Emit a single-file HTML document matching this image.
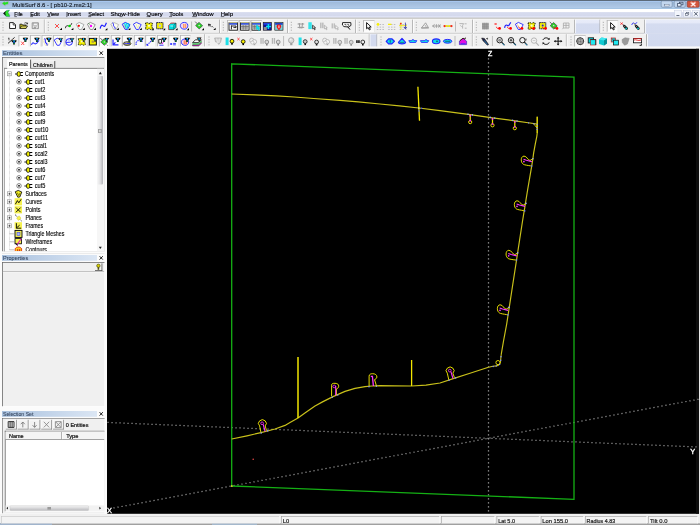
<!DOCTYPE html>
<html><head><meta charset="utf-8"><title>MultiSurf 8.6</title>
<style>
html,body{margin:0;padding:0;background:#f0f0f0;overflow:hidden}
svg{display:block}
text{font-family:"Liberation Sans",sans-serif}
</style></head><body>
<svg width="700" height="525" viewBox="0 0 700 525">
<defs><filter id="nf" x="0" y="0" width="100%" height="100%" filterUnits="userSpaceOnUse" color-interpolation-filters="sRGB"><feOffset dx="0" dy="0"/></filter></defs>
<g filter="url(#nf)">
<defs>
<linearGradient id="gTitle" x1="0" y1="0" x2="0" y2="1">
<stop offset="0" stop-color="#99b5d6"/><stop offset="1" stop-color="#b3cdea"/></linearGradient>
<linearGradient id="gMenu" x1="0" y1="0" x2="0" y2="1">
<stop offset="0" stop-color="#ffffff"/><stop offset="0.28" stop-color="#ffffff"/><stop offset="0.4" stop-color="#d6dbee"/><stop offset="0.75" stop-color="#d4d9ec"/><stop offset="0.9" stop-color="#e6eafb"/><stop offset="1" stop-color="#e6eafb"/></linearGradient>
<linearGradient id="gHdr" x1="0" y1="0" x2="1" y2="0">
<stop offset="0" stop-color="#a9c1de"/><stop offset="1" stop-color="#dbe6f4"/></linearGradient>
<linearGradient id="gLav" x1="0" y1="19.6" x2="0" y2="48" gradientUnits="userSpaceOnUse">
<stop offset="0" stop-color="#e8ecf9"/><stop offset="0.1" stop-color="#e6eaf8"/><stop offset="0.16" stop-color="#d5dcf0"/><stop offset="1" stop-color="#d1d9ee"/></linearGradient>
</defs>
<rect x="0" y="0" width="700" height="525" fill="#f0f0f0" />
<rect x="0" y="0" width="700" height="9" fill="url(#gTitle)" />
<rect x="0" y="0" width="700" height="0.9" fill="#4c5661" />
<rect x="0" y="0.9" width="700" height="1" fill="#a9c9f1" />
<rect x="0" y="8" width="700" height="1" fill="#a3c3e3" />
<rect x="0" y="9" width="700" height="9" fill="url(#gMenu)" />
<rect x="0" y="17.6" width="700" height="1.2" fill="#b9b9b5" />
<rect x="0" y="18.8" width="700" height="1" fill="#fbfbfb" />
<rect x="0" y="19.6" width="700" height="28.6" fill="#f0f0f0" />
<rect x="575" y="19.6" width="125" height="14.2" fill="url(#gLav)" />
<rect x="369.5" y="33.8" width="8" height="14.0" fill="#d3daee" />
<rect x="647" y="33.6" width="53" height="14.2" fill="url(#gLav)" />
<rect x="600" y="19.6" width="44.5" height="13.6" fill="#f0f0f0" />
<rect x="0" y="32.9" width="575" height="0.8" fill="#b2b2b2" />
<rect x="600" y="32.9" width="44.5" height="0.8" fill="#b2b2b2" />
<rect x="0" y="33.7" width="575" height="0.6" fill="#ffffff" />
<rect x="600" y="33.7" width="47" height="0.6" fill="#ffffff" />
<rect x="0" y="47.6" width="700" height="0.9" fill="#d8d8d8" />
<rect x="43.9" y="19.6" width="0.8" height="13.399999999999999" fill="#a0a0a0" />
<rect x="44.699999999999996" y="19.6" width="0.8" height="13.399999999999999" fill="#ffffff" />
<rect x="219.1" y="19.6" width="0.8" height="13.399999999999999" fill="#a0a0a0" />
<rect x="219.9" y="19.6" width="0.8" height="13.399999999999999" fill="#ffffff" />
<rect x="287.1" y="19.6" width="0.8" height="13.399999999999999" fill="#a0a0a0" />
<rect x="287.9" y="19.6" width="0.8" height="13.399999999999999" fill="#ffffff" />
<rect x="355.1" y="19.6" width="0.8" height="13.399999999999999" fill="#a0a0a0" />
<rect x="355.9" y="19.6" width="0.8" height="13.399999999999999" fill="#ffffff" />
<rect x="412.1" y="19.6" width="0.8" height="13.399999999999999" fill="#a0a0a0" />
<rect x="412.9" y="19.6" width="0.8" height="13.399999999999999" fill="#ffffff" />
<rect x="472.1" y="19.6" width="0.8" height="13.399999999999999" fill="#a0a0a0" />
<rect x="472.9" y="19.6" width="0.8" height="13.399999999999999" fill="#ffffff" />
<rect x="574.1" y="19.6" width="0.8" height="13.399999999999999" fill="#a0a0a0" />
<rect x="574.9" y="19.6" width="0.8" height="13.399999999999999" fill="#ffffff" />
<rect x="644.1" y="19.6" width="0.8" height="13.399999999999999" fill="#a0a0a0" />
<rect x="644.9" y="19.6" width="0.8" height="13.399999999999999" fill="#ffffff" />
<rect x="599.6" y="19.6" width="0.8" height="13.399999999999999" fill="#a0a0a0" />
<rect x="600.4" y="19.6" width="0.8" height="13.399999999999999" fill="#ffffff" />
<rect x="2.5" y="21.8" width="1" height="1.2" fill="#b0b0b0" />
<rect x="2.5" y="24.400000000000002" width="1" height="1.2" fill="#b0b0b0" />
<rect x="2.5" y="27.0" width="1" height="1.2" fill="#b0b0b0" />
<rect x="2.5" y="29.6" width="1" height="1.2" fill="#b0b0b0" />
<rect x="47.8" y="21.8" width="1" height="1.2" fill="#b0b0b0" />
<rect x="47.8" y="24.400000000000002" width="1" height="1.2" fill="#b0b0b0" />
<rect x="47.8" y="27.0" width="1" height="1.2" fill="#b0b0b0" />
<rect x="47.8" y="29.6" width="1" height="1.2" fill="#b0b0b0" />
<rect x="222.8" y="21.8" width="1" height="1.2" fill="#b0b0b0" />
<rect x="222.8" y="24.400000000000002" width="1" height="1.2" fill="#b0b0b0" />
<rect x="222.8" y="27.0" width="1" height="1.2" fill="#b0b0b0" />
<rect x="222.8" y="29.6" width="1" height="1.2" fill="#b0b0b0" />
<rect x="290.8" y="21.8" width="1" height="1.2" fill="#b0b0b0" />
<rect x="290.8" y="24.400000000000002" width="1" height="1.2" fill="#b0b0b0" />
<rect x="290.8" y="27.0" width="1" height="1.2" fill="#b0b0b0" />
<rect x="290.8" y="29.6" width="1" height="1.2" fill="#b0b0b0" />
<rect x="358.8" y="21.8" width="1" height="1.2" fill="#b0b0b0" />
<rect x="358.8" y="24.400000000000002" width="1" height="1.2" fill="#b0b0b0" />
<rect x="358.8" y="27.0" width="1" height="1.2" fill="#b0b0b0" />
<rect x="358.8" y="29.6" width="1" height="1.2" fill="#b0b0b0" />
<rect x="415.8" y="21.8" width="1" height="1.2" fill="#b0b0b0" />
<rect x="415.8" y="24.400000000000002" width="1" height="1.2" fill="#b0b0b0" />
<rect x="415.8" y="27.0" width="1" height="1.2" fill="#b0b0b0" />
<rect x="415.8" y="29.6" width="1" height="1.2" fill="#b0b0b0" />
<rect x="475.8" y="21.8" width="1" height="1.2" fill="#b0b0b0" />
<rect x="475.8" y="24.400000000000002" width="1" height="1.2" fill="#b0b0b0" />
<rect x="475.8" y="27.0" width="1" height="1.2" fill="#b0b0b0" />
<rect x="475.8" y="29.6" width="1" height="1.2" fill="#b0b0b0" />
<rect x="602.8" y="21.8" width="1" height="1.2" fill="#b0b0b0" />
<rect x="602.8" y="24.400000000000002" width="1" height="1.2" fill="#b0b0b0" />
<rect x="602.8" y="27.0" width="1" height="1.2" fill="#b0b0b0" />
<rect x="602.8" y="29.6" width="1" height="1.2" fill="#b0b0b0" />
<rect x="204.4" y="34.2" width="0.8" height="13.399999999999999" fill="#a0a0a0" />
<rect x="205.20000000000002" y="34.2" width="0.8" height="13.399999999999999" fill="#ffffff" />
<rect x="368.8" y="34.2" width="0.8" height="13.399999999999999" fill="#a0a0a0" />
<rect x="369.59999999999997" y="34.2" width="0.8" height="13.399999999999999" fill="#ffffff" />
<rect x="471.90000000000003" y="34.2" width="0.8" height="13.399999999999999" fill="#a0a0a0" />
<rect x="472.7" y="34.2" width="0.8" height="13.399999999999999" fill="#ffffff" />
<rect x="565.9" y="34.2" width="0.8" height="13.399999999999999" fill="#a0a0a0" />
<rect x="566.6999999999999" y="34.2" width="0.8" height="13.399999999999999" fill="#ffffff" />
<rect x="646.2" y="34.2" width="0.8" height="13.399999999999999" fill="#a0a0a0" />
<rect x="647.0" y="34.2" width="0.8" height="13.399999999999999" fill="#ffffff" />
<rect x="376.6" y="34.2" width="0.8" height="13.399999999999999" fill="#a0a0a0" />
<rect x="377.4" y="34.2" width="0.8" height="13.399999999999999" fill="#ffffff" />
<rect x="2.5" y="36.4" width="1" height="1.2" fill="#b0b0b0" />
<rect x="2.5" y="39.0" width="1" height="1.2" fill="#b0b0b0" />
<rect x="2.5" y="41.6" width="1" height="1.2" fill="#b0b0b0" />
<rect x="2.5" y="44.2" width="1" height="1.2" fill="#b0b0b0" />
<rect x="208.5" y="36.4" width="1" height="1.2" fill="#b0b0b0" />
<rect x="208.5" y="39.0" width="1" height="1.2" fill="#b0b0b0" />
<rect x="208.5" y="41.6" width="1" height="1.2" fill="#b0b0b0" />
<rect x="208.5" y="44.2" width="1" height="1.2" fill="#b0b0b0" />
<rect x="380.5" y="36.4" width="1" height="1.2" fill="#b0b0b0" />
<rect x="380.5" y="39.0" width="1" height="1.2" fill="#b0b0b0" />
<rect x="380.5" y="41.6" width="1" height="1.2" fill="#b0b0b0" />
<rect x="380.5" y="44.2" width="1" height="1.2" fill="#b0b0b0" />
<rect x="475.8" y="36.4" width="1" height="1.2" fill="#b0b0b0" />
<rect x="475.8" y="39.0" width="1" height="1.2" fill="#b0b0b0" />
<rect x="475.8" y="41.6" width="1" height="1.2" fill="#b0b0b0" />
<rect x="475.8" y="44.2" width="1" height="1.2" fill="#b0b0b0" />
<rect x="570.5" y="36.4" width="1" height="1.2" fill="#b0b0b0" />
<rect x="570.5" y="39.0" width="1" height="1.2" fill="#b0b0b0" />
<rect x="570.5" y="41.6" width="1" height="1.2" fill="#b0b0b0" />
<rect x="570.5" y="44.2" width="1" height="1.2" fill="#b0b0b0" />
<rect x="191.35" y="21.5" width="0.7" height="10.0" fill="#a8a8a8" />
<rect x="455.15" y="21.5" width="0.7" height="10.0" fill="#a8a8a8" />
<rect x="283.34999999999997" y="36" width="0.7" height="10" fill="#a8a8a8" />
<rect x="454.65" y="36" width="0.7" height="10" fill="#a8a8a8" />
<rect x="491.95" y="36" width="0.7" height="10" fill="#a8a8a8" />
<path d="M1.8,3.6 L4.6,1.0 L4.8,2.2 L8.6,1.2 L8.2,4.4 L5.4,4.8 L5.6,6.2 Z" fill="#22e022" stroke="#c8a8e0" stroke-width="0.5"/>
<text x="12.2" y="6.8" font-size="6.2" fill="#141c28" textLength="79.4" lengthAdjust="spacingAndGlyphs"  stroke="#141c28" stroke-width="0.15">MultiSurf 8.6 - [ pb10-2.ms2:1]</text>
<rect x="661.2" y="0.9" width="11" height="6.4" rx="1.2" fill="#c2d6ee" stroke="#6f86a6" stroke-width="0.6"/>
<rect x="674.2" y="0.9" width="11" height="6.4" rx="1.2" fill="#c2d6ee" stroke="#6f86a6" stroke-width="0.6"/>
<rect x="687.2" y="0.9" width="12" height="6.4" rx="1.2" fill="#d2553c" stroke="#8a3a30" stroke-width="0.6"/>
<rect x="664.5" y="4.4" width="4.6" height="1.6" fill="#f4f8ff" stroke="#50607a" stroke-width="0.4"/>
<rect x="679.4" y="2.2" width="3.6" height="2.6" fill="none" stroke="#42526c" stroke-width="0.8"/><rect x="677.4" y="3.6" width="3.6" height="2.6" fill="#e8f0fa" stroke="#42526c" stroke-width="0.8"/>
<path d="M691.4,2.6 L695.0,5.8 M695.0,2.6 L691.4,5.8" stroke="#f0a090" stroke-width="2.2" stroke-linecap="round"/><path d="M691.6,2.8 L694.8,5.6 M694.8,2.8 L691.6,5.6" stroke="#fff" stroke-width="1.1"/>
<rect x="674.6" y="10.6" width="7" height="6.4" fill="#f2f5fc" stroke="#c6cde0" stroke-width="0.5"/>
<rect x="683.6" y="10.6" width="7" height="6.4" fill="#f2f5fc" stroke="#c6cde0" stroke-width="0.5"/>
<rect x="692.4" y="10.6" width="7" height="6.4" fill="#f2f5fc" stroke="#c6cde0" stroke-width="0.5"/>
<rect x="676.4" y="15" width="3" height="0.9" fill="#5a6478" />
<rect x="686.4" y="12.4" width="2.4" height="2.0" fill="none" stroke="#5a6478" stroke-width="0.6"/><rect x="685.6" y="13.4" width="2.4" height="2.0" fill="#f2f5fc" stroke="#5a6478" stroke-width="0.6"/>
<path d="M694.2,12 L697.6,15.6 M697.6,12 L694.2,15.6" stroke="#4a5468" stroke-width="0.9"/>
<path d="M3.6,13.6 L6.4,10.4 L9.6,10 L8,12.4 L9.8,15.4 L9.6,16.8 L6,16.4 Z" fill="#22e022" stroke="#3030c0" stroke-width="0.3"/>
<path d="M3.2,13.4 L5.6,11 L6,15.8 Z" fill="#101010"/>
<path d="M5.2,12.8 L8.8,10.6 L7.4,13 L9,15.8 L6,15.4 Z" fill="#30e030"/>
<text x="14.3" y="15.7" font-size="6.1" fill="#08080c" textLength="8.4" lengthAdjust="spacingAndGlyphs"  stroke="#08080c" stroke-width="0.18">File</text>
<text x="30.2" y="15.7" font-size="6.1" fill="#08080c" textLength="9.6" lengthAdjust="spacingAndGlyphs"  stroke="#08080c" stroke-width="0.18">Edit</text>
<text x="47.2" y="15.7" font-size="6.1" fill="#08080c" textLength="11.8" lengthAdjust="spacingAndGlyphs"  stroke="#08080c" stroke-width="0.18">View</text>
<text x="66.2" y="15.7" font-size="6.1" fill="#08080c" textLength="14.8" lengthAdjust="spacingAndGlyphs"  stroke="#08080c" stroke-width="0.18">Insert</text>
<text x="88.2" y="15.7" font-size="6.1" fill="#08080c" textLength="15.8" lengthAdjust="spacingAndGlyphs"  stroke="#08080c" stroke-width="0.18">Select</text>
<text x="110.4" y="15.7" font-size="6.1" fill="#08080c" textLength="29.6" lengthAdjust="spacingAndGlyphs"  stroke="#08080c" stroke-width="0.18">Show-Hide</text>
<text x="146.6" y="15.7" font-size="6.1" fill="#08080c" textLength="16" lengthAdjust="spacingAndGlyphs"  stroke="#08080c" stroke-width="0.18">Query</text>
<text x="169.2" y="15.7" font-size="6.1" fill="#08080c" textLength="14.2" lengthAdjust="spacingAndGlyphs"  stroke="#08080c" stroke-width="0.18">Tools</text>
<text x="192.2" y="15.7" font-size="6.1" fill="#08080c" textLength="21.4" lengthAdjust="spacingAndGlyphs"  stroke="#08080c" stroke-width="0.18">Window</text>
<text x="220.8" y="15.7" font-size="6.1" fill="#08080c" textLength="12.2" lengthAdjust="spacingAndGlyphs"  stroke="#08080c" stroke-width="0.18">Help</text>
<rect x="14.3" y="16.45" width="2.6" height="0.6" fill="#18181c" />
<rect x="30.2" y="16.45" width="2.8" height="0.6" fill="#18181c" />
<rect x="47.2" y="16.45" width="3.2" height="0.6" fill="#18181c" />
<rect x="66.2" y="16.45" width="1.2" height="0.6" fill="#18181c" />
<rect x="88.2" y="16.45" width="3" height="0.6" fill="#18181c" />
<rect x="119.5" y="16.45" width="3" height="0.6" fill="#18181c" />
<rect x="146.6" y="16.45" width="3.6" height="0.6" fill="#18181c" />
<rect x="169.2" y="16.45" width="2.8" height="0.6" fill="#18181c" />
<rect x="192.2" y="16.45" width="4.6" height="0.6" fill="#18181c" />
<rect x="220.8" y="16.45" width="3.4" height="0.6" fill="#18181c" />
<rect x="0" y="513.4" width="700" height="10.6" fill="#f0f0f0" />
<rect x="0" y="513.4" width="700" height="0.6" fill="#ffffff" />
<rect x="0" y="523.3" width="700" height="1.7" fill="#a0a0a0" />
<rect x="0" y="523.3" width="52" height="1.7" fill="#a0b4cc" />
<rect x="212" y="523.3" width="45" height="1.7" fill="#a4b8cc" />
<rect x="1" y="516.0" width="278.6" height="7.4" fill="#f3f3f3" />
<rect x="1" y="516.0" width="278.6" height="0.6" fill="#c4c4c4" />
<rect x="1" y="516.0" width="0.6" height="7.4" fill="#c4c4c4" />
<rect x="279.1" y="516.0" width="0.5" height="7.4" fill="#ffffff" />
<rect x="281" y="516.0" width="158.60000000000002" height="7.4" fill="#f3f3f3" />
<rect x="281" y="516.0" width="158.60000000000002" height="0.6" fill="#9a9a9a" />
<rect x="281" y="516.0" width="0.6" height="7.4" fill="#9a9a9a" />
<rect x="439.1" y="516.0" width="0.5" height="7.4" fill="#ffffff" />
<rect x="441" y="516.0" width="54" height="7.4" fill="#f3f3f3" />
<rect x="441" y="516.0" width="54" height="0.6" fill="#9a9a9a" />
<rect x="441" y="516.0" width="0.6" height="7.4" fill="#9a9a9a" />
<rect x="494.5" y="516.0" width="0.5" height="7.4" fill="#ffffff" />
<rect x="496.6" y="516.0" width="42.799999999999955" height="7.4" fill="#f3f3f3" />
<rect x="496.6" y="516.0" width="42.799999999999955" height="0.6" fill="#9a9a9a" />
<rect x="496.6" y="516.0" width="0.6" height="7.4" fill="#9a9a9a" />
<rect x="538.9" y="516.0" width="0.5" height="7.4" fill="#ffffff" />
<rect x="540.8" y="516.0" width="42.80000000000007" height="7.4" fill="#f3f3f3" />
<rect x="540.8" y="516.0" width="42.80000000000007" height="0.6" fill="#9a9a9a" />
<rect x="540.8" y="516.0" width="0.6" height="7.4" fill="#9a9a9a" />
<rect x="583.1" y="516.0" width="0.5" height="7.4" fill="#ffffff" />
<rect x="585" y="516.0" width="62" height="7.4" fill="#f3f3f3" />
<rect x="585" y="516.0" width="62" height="0.6" fill="#9a9a9a" />
<rect x="585" y="516.0" width="0.6" height="7.4" fill="#9a9a9a" />
<rect x="646.5" y="516.0" width="0.5" height="7.4" fill="#ffffff" />
<rect x="648.4" y="516.0" width="49.60000000000002" height="7.4" fill="#f3f3f3" />
<rect x="648.4" y="516.0" width="49.60000000000002" height="0.6" fill="#9a9a9a" />
<rect x="648.4" y="516.0" width="0.6" height="7.4" fill="#9a9a9a" />
<rect x="697.5" y="516.0" width="0.5" height="7.4" fill="#ffffff" />
<text x="282.8" y="522.7" font-size="6.1" fill="#181818" textLength="6.4" lengthAdjust="spacingAndGlyphs"  stroke="#181818" stroke-width="0.2">L0</text>
<text x="498.2" y="522.7" font-size="6.1" fill="#181818" textLength="16.8" lengthAdjust="spacingAndGlyphs"  stroke="#181818" stroke-width="0.2">Lat 5.0</text>
<text x="542.2" y="522.7" font-size="6.1" fill="#181818" textLength="25.8" lengthAdjust="spacingAndGlyphs"  stroke="#181818" stroke-width="0.2">Lon 155.0</text>
<text x="586.6" y="522.7" font-size="6.1" fill="#181818" textLength="28.6" lengthAdjust="spacingAndGlyphs"  stroke="#181818" stroke-width="0.2">Radius 4.83</text>
<text x="650.0" y="522.7" font-size="6.1" fill="#181818" textLength="17.4" lengthAdjust="spacingAndGlyphs"  stroke="#181818" stroke-width="0.2">Tilt 0.0</text>
<rect x="0" y="46.4" width="700" height="2.6" fill="#fafafa" />
<rect x="107" y="48.8" width="592" height="465.0" fill="#000000" />
<rect x="696.0" y="48.8" width="3.0" height="464.9" fill="#0d0d0d" />
<rect x="699.1" y="48.8" width="0.9" height="464.9" fill="#e8e8e8" />
<g fill="none" stroke-linecap="butt">
<line x1="113.50" y1="507.98" x2="700.00" y2="399.00" stroke="#a4a4a4" stroke-width="1.25" stroke-dasharray="1.1 2.968" stroke-dashoffset="0"/>
<line x1="107.50" y1="422.45" x2="699.00" y2="447.06" stroke="#a4a4a4" stroke-width="1.25" stroke-dasharray="1.1 2.903" stroke-dashoffset="0"/>
<line x1="488.50" y1="58.30" x2="488.50" y2="513.50" stroke="#a4a4a4" stroke-width="1.25" stroke-dasharray="1.1 2.900" stroke-dashoffset="0"/>
<path d="M231.7,63.8 L574,77.2 L574,499.3 L231.7,486 Z" stroke="#14b014" stroke-width="1.3"/>
<rect x="231" y="485.3" width="1.6" height="1.5" fill="#e8e820" />
<polyline points="231.7,94.0 254.6,94.8 276.4,95.8 294.4,97.0 313.7,98.5 340.0,100.3 358.3,101.8 380.0,104.0 399.4,105.8 418.8,108.0 440.0,110.7 455.0,112.6 470.2,114.7 492.5,117.8 514.8,120.8 530.0,123.0 537.3,124.2" stroke="#c9c11a" stroke-width="1.2" stroke-linejoin="round" />
<polyline points="537.2,116.7 537.2,133.2 536.8,136.5 535.4,143.3 533.7,152.7 532.9,158.7 531.7,166.1 527.6,190.0 524.7,207.9 522.7,220.0 519.6,240.0 515.0,270.0 511.3,294.0 506.7,324.0 503.7,340.0 501.3,354.0" stroke="#c9c11a" stroke-width="1.2" stroke-linejoin="round" />
<polyline points="488.5,367.3 470.0,373.3 454.0,378.4 440.0,383.0 426.0,385.2 411.6,386.0 395.0,385.9 380.0,385.7 372.0,386.0 365.0,386.6 355.0,388.4 345.0,391.4 333.0,396.6 323.0,401.6 315.0,406.0 306.0,412.3 298.0,418.0 290.0,422.6 285.0,425.4 275.0,429.0 261.0,432.6 247.0,435.8 231.7,439.0" stroke="#c9c11a" stroke-width="1.2" stroke-linejoin="round" />
<path d="M501.3,354 L500.9,357 L500.6,361.2 C500.4,363.4 499.4,364.8 498.0,365.4 L496.2,365.9 L493,366.3 L488.5,367.3" stroke="#c9c11a" stroke-width="1.1"/>
<circle cx="498.0" cy="362.6" r="2.1" stroke="#f2e600" stroke-width="0.9"/>
<line x1="417.9" y1="86.7" x2="419.5" y2="120.8" stroke="#f2e600" stroke-width="1.3" />
<line x1="298" y1="357" x2="298" y2="418" stroke="#f2e600" stroke-width="1.5" />
<line x1="411.6" y1="360" x2="411.6" y2="386" stroke="#f2e600" stroke-width="1.3" />
<circle cx="418.8" cy="108.1" r="0.8" fill="#d8d8c0" stroke="none"/>
<circle cx="421.6" cy="108.3" r="0.7" fill="#3048ff" stroke="none"/>
<circle cx="418.8" cy="110.9" r="0.7" fill="#3048ff" stroke="none"/>
<line x1="470.2" y1="114.7" x2="470.2" y2="120.3" stroke="#f2e600" stroke-width="1.25" />
<circle cx="470.2" cy="122.10000000000001" r="1.6" stroke="#f2e600" stroke-width="0.95"/>
<circle cx="468.0" cy="114.2" r="0.8" fill="#90a0ff" stroke="none"/>
<circle cx="472.4" cy="114.9" r="0.8" fill="#90a0ff" stroke="none"/>
<circle cx="470.2" cy="115.7" r="0.9" fill="#ff30ff" stroke="none"/>
<circle cx="470.2" cy="120.7" r="0.85" fill="#ff30ff" stroke="none"/>
<line x1="492.5" y1="117.9" x2="492.5" y2="123.5" stroke="#f2e600" stroke-width="1.25" />
<circle cx="492.5" cy="125.30000000000001" r="1.6" stroke="#f2e600" stroke-width="0.95"/>
<circle cx="490.3" cy="117.4" r="0.8" fill="#90a0ff" stroke="none"/>
<circle cx="494.7" cy="118.10000000000001" r="0.8" fill="#90a0ff" stroke="none"/>
<circle cx="492.5" cy="118.9" r="0.9" fill="#ff30ff" stroke="none"/>
<circle cx="492.5" cy="123.9" r="0.85" fill="#ff30ff" stroke="none"/>
<line x1="514.8" y1="120.8" x2="514.8" y2="126.39999999999999" stroke="#f2e600" stroke-width="1.25" />
<circle cx="514.8" cy="128.2" r="1.6" stroke="#f2e600" stroke-width="0.95"/>
<circle cx="512.5999999999999" cy="120.3" r="0.8" fill="#90a0ff" stroke="none"/>
<circle cx="517.0" cy="121.0" r="0.8" fill="#90a0ff" stroke="none"/>
<circle cx="514.8" cy="121.8" r="0.9" fill="#ff30ff" stroke="none"/>
<circle cx="514.8" cy="126.8" r="0.85" fill="#ff30ff" stroke="none"/>
<path d="M533.6,123.6 L536.6,127.6 L537.2,124.2" stroke="#f2e600" stroke-width="0.8"/>
<line x1="537.2" y1="116.7" x2="537.2" y2="133" stroke="#f2e600" stroke-width="0.9" />
<circle cx="528.6" cy="122.9" r="0.7" fill="#8090ff" stroke="none"/>
<circle cx="533.8" cy="123.7" r="0.75" fill="#8090ff" stroke="none"/>
<circle cx="537.2" cy="124.4" r="0.7" fill="#8090ff" stroke="none"/>
<circle cx="537.0" cy="127.4" r="0.7" fill="#8090ff" stroke="none"/>
<circle cx="537.0" cy="129.4" r="0.7" fill="#8090ff" stroke="none"/>
<path d="M532.9,158.7 L530.0,160.5 C527.6999999999999,160.1 526.9,156.1 524.0,156.1 C520.4,156.1 520.1999999999999,163.5 524.3,164.7 C526.9,165.39999999999998 529.9,165.7 531.7,166.1" stroke="#f2e600" stroke-width="0.95"/>
<path d="M523.5,159.29999999999998 L526.4,160.29999999999998 L531.9,161.7" stroke="#ff38ff" stroke-width="1.1"/>
<circle cx="523.9" cy="161.6" r="0.85" fill="#ff38ff" stroke="none"/>
<circle cx="532.9" cy="158.7" r="0.8" fill="#98a4ff" stroke="none"/>
<circle cx="531.7" cy="166.1" r="0.8" fill="#6878ff" stroke="none"/>
<path d="M526.0,203.4 L523.1,205.20000000000002 C520.8,204.8 520.0,200.8 517.1,200.8 C513.5,200.8 513.3,208.20000000000002 517.4,209.4 C520.0,210.1 523.0,210.4 524.7,210.9" stroke="#f2e600" stroke-width="0.95"/>
<path d="M516.6,204.0 L519.5,205.0 L525.0,206.4" stroke="#ff38ff" stroke-width="1.1"/>
<circle cx="517.0" cy="206.3" r="0.85" fill="#ff38ff" stroke="none"/>
<circle cx="526.0" cy="203.4" r="0.8" fill="#98a4ff" stroke="none"/>
<circle cx="524.7" cy="210.9" r="0.8" fill="#6878ff" stroke="none"/>
<path d="M517.7,252.9 L514.8000000000001,254.70000000000002 C512.5,254.3 511.70000000000005,250.3 508.80000000000007,250.3 C505.20000000000005,250.3 505.00000000000006,257.7 509.1,258.9 C511.70000000000005,259.6 514.7,259.9 516.6,260.1" stroke="#f2e600" stroke-width="0.95"/>
<path d="M508.30000000000007,253.5 L511.20000000000005,254.5 L516.7,255.9" stroke="#ff38ff" stroke-width="1.1"/>
<circle cx="508.70000000000005" cy="255.8" r="0.85" fill="#ff38ff" stroke="none"/>
<circle cx="517.7" cy="252.9" r="0.8" fill="#98a4ff" stroke="none"/>
<circle cx="516.6" cy="260.1" r="0.8" fill="#6878ff" stroke="none"/>
<path d="M509.0,307.4 L506.1,309.2 C503.8,308.79999999999995 503.0,304.79999999999995 500.1,304.79999999999995 C496.5,304.79999999999995 496.3,312.2 500.4,313.4 C503.0,314.09999999999997 506.0,314.4 507.9,314.9" stroke="#f2e600" stroke-width="0.95"/>
<path d="M499.6,308.0 L502.5,309.0 L508.0,310.4" stroke="#ff38ff" stroke-width="1.1"/>
<circle cx="500.0" cy="310.29999999999995" r="0.85" fill="#ff38ff" stroke="none"/>
<circle cx="509.0" cy="307.4" r="0.8" fill="#98a4ff" stroke="none"/>
<circle cx="507.9" cy="314.9" r="0.8" fill="#6878ff" stroke="none"/>
<path d="M261,432.6 L259.6,425.90000000000003 A3.9,3.6 0 1 1 265.2,425.90000000000003 L266.5,430.6" stroke="#f2e600" stroke-width="0.95"/>
<circle cx="262.1" cy="423.3" r="1.35" stroke="#ff38ff" stroke-width="0.8"/>
<path d="M263.2,424.3 L265.1,431.5" stroke="#ff38ff" stroke-width="1.1"/>
<circle cx="261.2" cy="433.0" r="0.8" fill="#8090ff" stroke="none"/>
<circle cx="267.7" cy="430.90000000000003" r="0.8" fill="#8090ff" stroke="none"/>
<path d="M448.8,379.8 L447.3,373.20000000000005 A3.9,3.6 0 1 1 452.9,373.20000000000005 L454.4,377.6" stroke="#f2e600" stroke-width="0.95"/>
<circle cx="449.8" cy="370.6" r="1.35" stroke="#ff38ff" stroke-width="0.8"/>
<path d="M450.9,371.6 L453.0,378.5" stroke="#ff38ff" stroke-width="1.1"/>
<circle cx="449.0" cy="380.2" r="0.8" fill="#8090ff" stroke="none"/>
<circle cx="455.59999999999997" cy="377.90000000000003" r="0.8" fill="#8090ff" stroke="none"/>
<path d="M331.6,396.2 L331.6,385.2 C331.6,383.4 333,383.3 335,383.3 C337.6,383.3 338.8,384.6 338.7,386.2 C338.6,387.8 337.6,388.6 336.4,388.9 L336.4,395" stroke="#f2e600" stroke-width="0.95"/>
<circle cx="334.2" cy="386.4" r="1.35" stroke="#ff38ff" stroke-width="0.8"/>
<path d="M335.7,386 L335.7,395.6" stroke="#ff38ff" stroke-width="1.1"/>
<circle cx="332.2" cy="397.3" r="0.8" fill="#8090ff" stroke="none"/>
<circle cx="337.8" cy="395.0" r="0.8" fill="#8090ff" stroke="none"/>
<path d="M369.1,386.2 L369.1,376.2 C369.1,374.2 370.8,373.7 372.6,373.7 C375.2,373.7 377,375 376.9,377 C376.8,378.4 375.6,379.2 374.5,379.6 L376.5,386" stroke="#f2e600" stroke-width="0.95"/>
<path d="M370.8,376.4 L372.4,376.4 L373.4,386" stroke="#ff38ff" stroke-width="1.3"/>
<circle cx="369.0" cy="386.7" r="0.8" fill="#8090ff" stroke="none"/>
<circle cx="376.4" cy="386.2" r="0.8" fill="#8090ff" stroke="none"/>
<circle cx="501.0" cy="356.8" r="0.75" fill="#8090ff" stroke="none"/>
<circle cx="500.7" cy="360.2" r="0.75" fill="#8090ff" stroke="none"/>
<circle cx="499.6" cy="364.4" r="0.75" fill="#8090ff" stroke="none"/>
<circle cx="496.2" cy="365.9" r="0.75" fill="#8090ff" stroke="none"/>
<circle cx="493.2" cy="366.4" r="0.75" fill="#8090ff" stroke="none"/>
<circle cx="253.2" cy="459.3" r="0.8" fill="#e84848" stroke="none"/>
</g>
<text x="487.9" y="56.2" font-size="7.0" fill="#ffffff"  stroke="#ffffff" stroke-width="0.35">Z</text>
<text x="690.2" y="453.9" font-size="7.4" fill="#ffffff"  stroke="#ffffff" stroke-width="0.35">Y</text>
<text x="106.9" y="513.2" font-size="7.4" fill="#ffffff"  stroke="#ffffff" stroke-width="0.3">X</text>
<rect x="0" y="48.4" width="107" height="465.3" fill="#fbfbfb" />
<rect x="2" y="50.2" width="95" height="5.8" fill="url(#gHdr)" />
<text x="3.0" y="55.1" font-size="5.8" fill="#35465f" textLength="19.4" lengthAdjust="spacingAndGlyphs"  stroke="#35465f" stroke-width="0.08">Entities</text>
<path d="M99.6,51.400000000000006 L102.8,54.800000000000004 M102.8,51.400000000000006 L99.6,54.800000000000004" stroke="#101010" stroke-width="0.95" fill="none"/>
<rect x="2.6" y="57.8" width="101.6" height="193.4" fill="#ececec" />
<rect x="2.0" y="57.0" width="102.4" height="0.8" fill="#6e6e6e" />
<rect x="2.0" y="57.0" width="0.8" height="194.4" fill="#6e6e6e" />
<rect x="104.0" y="57.4" width="0.5" height="194" fill="#dcdcdc" />
<rect x="2.0" y="251.2" width="102.4" height="0.7" fill="#e4e4e4" />
<rect x="4.6" y="68.6" width="99" height="182.6" fill="#ffffff" />
<rect x="4.0" y="67.9" width="100" height="0.8" fill="#6e6e6e" />
<rect x="4.0" y="67.9" width="0.7" height="183.4" fill="#8a8a8a" />
<rect x="7.2" y="59.4" width="23.2" height="9.4" fill="#ffffff" />
<rect x="30.3" y="59.6" width="0.8" height="8.6" fill="#303030" />
<rect x="54.4" y="61.0" width="0.8" height="7.2" fill="#303030" />
<rect x="31.2" y="60.6" width="23.2" height="0.6" fill="#ffffff" />
<text x="9.0" y="66.4" font-size="6.2" fill="#101010" textLength="18.6" lengthAdjust="spacingAndGlyphs"  stroke="#101010" stroke-width="0.2">Parents</text>
<text x="33.0" y="66.9" font-size="6.2" fill="#101010" textLength="19.6" lengthAdjust="spacingAndGlyphs"  stroke="#101010" stroke-width="0.2">Children</text>
<linearGradient id="gThumb" x1="0" y1="0" x2="1" y2="0"><stop offset="0" stop-color="#f6f6f6"/><stop offset="0.5" stop-color="#e2e2e4"/><stop offset="1" stop-color="#b4b4b8"/></linearGradient>
<rect x="97.0" y="68.8" width="6.4" height="182.4" fill="#f6f6f6" />
<rect x="97.2" y="76.0" width="5.8" height="108.4" fill="url(#gThumb)" rx="0.8"/>
<path d="M98.8,74.2 L100.3,71.8 L101.8,74.2 Z" fill="#202020"/>
<path d="M98.8,246.8 L100.3,249.0 L101.8,246.8 Z" fill="#202020"/>
<rect x="98.2" y="129.0" width="3.4" height="4.0" fill="#8a8a8a" />
<rect x="99.0" y="129.6" width="1.8" height="2.8" fill="#d8d8d8" />
<path d="M9.5,76.2 L9.5,249.8" stroke="#b0b0b0" stroke-width="0.6" stroke-dasharray="0.6 0.6"/>
<path d="M9.5,233.8 L14.2,233.8" stroke="#909090" stroke-width="0.6"/>
<path d="M9.5,241.8 L14.2,241.8" stroke="#909090" stroke-width="0.6"/>
<path d="M9.5,249.8 L14.2,249.8" stroke="#909090" stroke-width="0.6"/>
<rect x="7.5" y="71.8" width="4" height="4" fill="#fff" stroke="#8c8c8c" stroke-width="0.6"/>
<path d="M8.4,73.8 L10.6,73.8" stroke="#202020" stroke-width="0.6"/>
<path d="M15.0,74.0 L17.4,74.0" stroke="#000" stroke-width="0.9"/>
<rect x="17.2" y="71.7" width="3.1" height="4.6" rx="1.3" fill="#f4f000" stroke="#000" stroke-width="0.75"/>
<rect x="20.4" y="72.0" width="2.5" height="1.0" fill="#000" />
<rect x="20.4" y="75.0" width="2.5" height="1.0" fill="#000" />
<text x="25.0" y="76.0" font-size="6.3" fill="#000" textLength="29.2" lengthAdjust="spacingAndGlyphs"  stroke="#000" stroke-width="0.12">Components</text>
<circle cx="19.0" cy="81.8" r="2.25" fill="#fff" stroke="#5e5e5e" stroke-width="0.75"/>
<rect x="18.2" y="81.0" width="1.6" height="1.6" fill="#181818"/>
<path d="M24.400000000000002,82.0 L26.8,82.0" stroke="#000" stroke-width="0.9"/>
<rect x="26.6" y="79.7" width="3.1" height="4.6" rx="1.3" fill="#f4f000" stroke="#000" stroke-width="0.75"/>
<rect x="29.8" y="80.0" width="2.5" height="1.0" fill="#000" />
<rect x="29.8" y="83.0" width="2.5" height="1.0" fill="#000" />
<text x="34.8" y="84.0" font-size="6.3" fill="#000" textLength="10.2" lengthAdjust="spacingAndGlyphs"  stroke="#000" stroke-width="0.12">cut1</text>
<circle cx="19.0" cy="89.8" r="2.25" fill="#fff" stroke="#5e5e5e" stroke-width="0.75"/>
<rect x="18.2" y="89.0" width="1.6" height="1.6" fill="#181818"/>
<path d="M24.400000000000002,90.0 L26.8,90.0" stroke="#000" stroke-width="0.9"/>
<rect x="26.6" y="87.7" width="3.1" height="4.6" rx="1.3" fill="#f4f000" stroke="#000" stroke-width="0.75"/>
<rect x="29.8" y="88.0" width="2.5" height="1.0" fill="#000" />
<rect x="29.8" y="91.0" width="2.5" height="1.0" fill="#000" />
<text x="34.8" y="92.0" font-size="6.3" fill="#000" textLength="10.6" lengthAdjust="spacingAndGlyphs"  stroke="#000" stroke-width="0.12">cut2</text>
<circle cx="19.0" cy="97.8" r="2.25" fill="#fff" stroke="#5e5e5e" stroke-width="0.75"/>
<rect x="18.2" y="97.0" width="1.6" height="1.6" fill="#181818"/>
<path d="M24.400000000000002,98.0 L26.8,98.0" stroke="#000" stroke-width="0.9"/>
<rect x="26.6" y="95.7" width="3.1" height="4.6" rx="1.3" fill="#f4f000" stroke="#000" stroke-width="0.75"/>
<rect x="29.8" y="96.0" width="2.5" height="1.0" fill="#000" />
<rect x="29.8" y="99.0" width="2.5" height="1.0" fill="#000" />
<text x="34.8" y="100.0" font-size="6.3" fill="#000" textLength="10.6" lengthAdjust="spacingAndGlyphs"  stroke="#000" stroke-width="0.12">cut3</text>
<circle cx="19.0" cy="105.8" r="2.25" fill="#fff" stroke="#5e5e5e" stroke-width="0.75"/>
<rect x="18.2" y="105.0" width="1.6" height="1.6" fill="#181818"/>
<path d="M24.400000000000002,106.0 L26.8,106.0" stroke="#000" stroke-width="0.9"/>
<rect x="26.6" y="103.7" width="3.1" height="4.6" rx="1.3" fill="#f4f000" stroke="#000" stroke-width="0.75"/>
<rect x="29.8" y="104.0" width="2.5" height="1.0" fill="#000" />
<rect x="29.8" y="107.0" width="2.5" height="1.0" fill="#000" />
<text x="34.8" y="108.0" font-size="6.3" fill="#000" textLength="10.6" lengthAdjust="spacingAndGlyphs"  stroke="#000" stroke-width="0.12">cut4</text>
<circle cx="19.0" cy="113.8" r="2.25" fill="#fff" stroke="#5e5e5e" stroke-width="0.75"/>
<rect x="18.2" y="113.0" width="1.6" height="1.6" fill="#181818"/>
<path d="M24.400000000000002,114.0 L26.8,114.0" stroke="#000" stroke-width="0.9"/>
<rect x="26.6" y="111.7" width="3.1" height="4.6" rx="1.3" fill="#f4f000" stroke="#000" stroke-width="0.75"/>
<rect x="29.8" y="112.0" width="2.5" height="1.0" fill="#000" />
<rect x="29.8" y="115.0" width="2.5" height="1.0" fill="#000" />
<text x="34.8" y="116.0" font-size="6.3" fill="#000" textLength="10.6" lengthAdjust="spacingAndGlyphs"  stroke="#000" stroke-width="0.12">cut8</text>
<circle cx="19.0" cy="121.8" r="2.25" fill="#fff" stroke="#5e5e5e" stroke-width="0.75"/>
<rect x="18.2" y="121.0" width="1.6" height="1.6" fill="#181818"/>
<path d="M24.400000000000002,122.0 L26.8,122.0" stroke="#000" stroke-width="0.9"/>
<rect x="26.6" y="119.7" width="3.1" height="4.6" rx="1.3" fill="#f4f000" stroke="#000" stroke-width="0.75"/>
<rect x="29.8" y="120.0" width="2.5" height="1.0" fill="#000" />
<rect x="29.8" y="123.0" width="2.5" height="1.0" fill="#000" />
<text x="34.8" y="124.0" font-size="6.3" fill="#000" textLength="10.6" lengthAdjust="spacingAndGlyphs"  stroke="#000" stroke-width="0.12">cut9</text>
<circle cx="19.0" cy="129.8" r="2.25" fill="#fff" stroke="#5e5e5e" stroke-width="0.75"/>
<rect x="18.2" y="129.0" width="1.6" height="1.6" fill="#181818"/>
<path d="M24.400000000000002,130.0 L26.8,130.0" stroke="#000" stroke-width="0.9"/>
<rect x="26.6" y="127.70000000000002" width="3.1" height="4.6" rx="1.3" fill="#f4f000" stroke="#000" stroke-width="0.75"/>
<rect x="29.8" y="128.0" width="2.5" height="1.0" fill="#000" />
<rect x="29.8" y="131.0" width="2.5" height="1.0" fill="#000" />
<text x="34.8" y="132.0" font-size="6.3" fill="#000" textLength="13.6" lengthAdjust="spacingAndGlyphs"  stroke="#000" stroke-width="0.12">cut10</text>
<circle cx="19.0" cy="137.8" r="2.25" fill="#fff" stroke="#5e5e5e" stroke-width="0.75"/>
<rect x="18.2" y="137.0" width="1.6" height="1.6" fill="#181818"/>
<path d="M24.400000000000002,138.0 L26.8,138.0" stroke="#000" stroke-width="0.9"/>
<rect x="26.6" y="135.70000000000002" width="3.1" height="4.6" rx="1.3" fill="#f4f000" stroke="#000" stroke-width="0.75"/>
<rect x="29.8" y="136.0" width="2.5" height="1.0" fill="#000" />
<rect x="29.8" y="139.0" width="2.5" height="1.0" fill="#000" />
<text x="34.8" y="140.0" font-size="6.3" fill="#000" textLength="13.2" lengthAdjust="spacingAndGlyphs"  stroke="#000" stroke-width="0.12">cut11</text>
<circle cx="19.0" cy="145.8" r="2.25" fill="#fff" stroke="#5e5e5e" stroke-width="0.75"/>
<rect x="18.2" y="145.0" width="1.6" height="1.6" fill="#181818"/>
<path d="M24.400000000000002,146.0 L26.8,146.0" stroke="#000" stroke-width="0.9"/>
<rect x="26.6" y="143.70000000000002" width="3.1" height="4.6" rx="1.3" fill="#f4f000" stroke="#000" stroke-width="0.75"/>
<rect x="29.8" y="144.0" width="2.5" height="1.0" fill="#000" />
<rect x="29.8" y="147.0" width="2.5" height="1.0" fill="#000" />
<text x="34.8" y="148.0" font-size="6.3" fill="#000" textLength="12.2" lengthAdjust="spacingAndGlyphs"  stroke="#000" stroke-width="0.12">scal1</text>
<circle cx="19.0" cy="153.8" r="2.25" fill="#fff" stroke="#5e5e5e" stroke-width="0.75"/>
<rect x="18.2" y="153.0" width="1.6" height="1.6" fill="#181818"/>
<path d="M24.400000000000002,154.0 L26.8,154.0" stroke="#000" stroke-width="0.9"/>
<rect x="26.6" y="151.70000000000002" width="3.1" height="4.6" rx="1.3" fill="#f4f000" stroke="#000" stroke-width="0.75"/>
<rect x="29.8" y="152.0" width="2.5" height="1.0" fill="#000" />
<rect x="29.8" y="155.0" width="2.5" height="1.0" fill="#000" />
<text x="34.8" y="156.0" font-size="6.3" fill="#000" textLength="12.6" lengthAdjust="spacingAndGlyphs"  stroke="#000" stroke-width="0.12">scal2</text>
<circle cx="19.0" cy="161.8" r="2.25" fill="#fff" stroke="#5e5e5e" stroke-width="0.75"/>
<rect x="18.2" y="161.0" width="1.6" height="1.6" fill="#181818"/>
<path d="M24.400000000000002,162.0 L26.8,162.0" stroke="#000" stroke-width="0.9"/>
<rect x="26.6" y="159.70000000000002" width="3.1" height="4.6" rx="1.3" fill="#f4f000" stroke="#000" stroke-width="0.75"/>
<rect x="29.8" y="160.0" width="2.5" height="1.0" fill="#000" />
<rect x="29.8" y="163.0" width="2.5" height="1.0" fill="#000" />
<text x="34.8" y="164.0" font-size="6.3" fill="#000" textLength="12.6" lengthAdjust="spacingAndGlyphs"  stroke="#000" stroke-width="0.12">scal3</text>
<circle cx="19.0" cy="169.8" r="2.25" fill="#fff" stroke="#5e5e5e" stroke-width="0.75"/>
<rect x="18.2" y="169.0" width="1.6" height="1.6" fill="#181818"/>
<path d="M24.400000000000002,170.0 L26.8,170.0" stroke="#000" stroke-width="0.9"/>
<rect x="26.6" y="167.70000000000002" width="3.1" height="4.6" rx="1.3" fill="#f4f000" stroke="#000" stroke-width="0.75"/>
<rect x="29.8" y="168.0" width="2.5" height="1.0" fill="#000" />
<rect x="29.8" y="171.0" width="2.5" height="1.0" fill="#000" />
<text x="34.8" y="172.0" font-size="6.3" fill="#000" textLength="10.6" lengthAdjust="spacingAndGlyphs"  stroke="#000" stroke-width="0.12">cut6</text>
<circle cx="19.0" cy="177.8" r="2.25" fill="#fff" stroke="#5e5e5e" stroke-width="0.75"/>
<rect x="18.2" y="177.0" width="1.6" height="1.6" fill="#181818"/>
<path d="M24.400000000000002,178.0 L26.8,178.0" stroke="#000" stroke-width="0.9"/>
<rect x="26.6" y="175.70000000000002" width="3.1" height="4.6" rx="1.3" fill="#f4f000" stroke="#000" stroke-width="0.75"/>
<rect x="29.8" y="176.0" width="2.5" height="1.0" fill="#000" />
<rect x="29.8" y="179.0" width="2.5" height="1.0" fill="#000" />
<text x="34.8" y="180.0" font-size="6.3" fill="#000" textLength="10.6" lengthAdjust="spacingAndGlyphs"  stroke="#000" stroke-width="0.12">cut7</text>
<circle cx="19.0" cy="185.8" r="2.25" fill="#fff" stroke="#5e5e5e" stroke-width="0.75"/>
<rect x="18.2" y="185.0" width="1.6" height="1.6" fill="#181818"/>
<path d="M24.400000000000002,186.0 L26.8,186.0" stroke="#000" stroke-width="0.9"/>
<rect x="26.6" y="183.70000000000002" width="3.1" height="4.6" rx="1.3" fill="#f4f000" stroke="#000" stroke-width="0.75"/>
<rect x="29.8" y="184.0" width="2.5" height="1.0" fill="#000" />
<rect x="29.8" y="187.0" width="2.5" height="1.0" fill="#000" />
<text x="34.8" y="188.0" font-size="6.3" fill="#000" textLength="10.6" lengthAdjust="spacingAndGlyphs"  stroke="#000" stroke-width="0.12">cut5</text>
<clipPath id="cTree"><rect x="4.6" y="68.6" width="92.4" height="182.4"/></clipPath><g clip-path="url(#cTree)">
<rect x="7.5" y="191.8" width="4" height="4" fill="#fff" stroke="#8c8c8c" stroke-width="0.6"/>
<path d="M8.4,193.8 L10.6,193.8 M9.5,192.70000000000002 L9.5,194.9" stroke="#202020" stroke-width="0.6"/>
<text x="25.4" y="196.0" font-size="6.3" fill="#000" textLength="21.2" lengthAdjust="spacingAndGlyphs"  stroke="#000" stroke-width="0.12">Surfaces</text>
<path d="M15.2,191.8 L18.2,190.4 L21.8,192.00000000000003 L19.8,197.00000000000003 L17.8,197.20000000000002 Z" fill="#f4f020" stroke="#000" stroke-width="0.8"/>
<path d="M17.2,192.60000000000002 L18.8,195.60000000000002 L20.2,192.8" fill="none" stroke="#000" stroke-width="0.5"/>
<rect x="7.5" y="199.8" width="4" height="4" fill="#fff" stroke="#8c8c8c" stroke-width="0.6"/>
<path d="M8.4,201.8 L10.6,201.8 M9.5,200.70000000000002 L9.5,202.9" stroke="#202020" stroke-width="0.6"/>
<text x="25.4" y="204.0" font-size="6.3" fill="#000" textLength="16.6" lengthAdjust="spacingAndGlyphs"  stroke="#000" stroke-width="0.12">Curves</text>
<rect x="14.6" y="198.20000000000002" width="7.4" height="7.2" fill="#f6f250" />
<path d="M15.4,204.20000000000002 L17.4,200.60000000000002 L18.8,202.8 L21.2,199.20000000000002" fill="none" stroke="#000" stroke-width="0.9"/>
<rect x="7.5" y="207.8" width="4" height="4" fill="#fff" stroke="#8c8c8c" stroke-width="0.6"/>
<path d="M8.4,209.8 L10.6,209.8 M9.5,208.70000000000002 L9.5,210.9" stroke="#202020" stroke-width="0.6"/>
<text x="25.4" y="212.0" font-size="6.3" fill="#000" textLength="15.2" lengthAdjust="spacingAndGlyphs"  stroke="#000" stroke-width="0.12">Points</text>
<rect x="14.6" y="206.20000000000002" width="7.4" height="7.2" fill="#f6f250" />
<path d="M16.0,207.60000000000002 L20.6,212.20000000000002 M20.6,207.60000000000002 L16.0,212.20000000000002" fill="none" stroke="#000" stroke-width="0.9"/>
<rect x="7.5" y="215.8" width="4" height="4" fill="#fff" stroke="#8c8c8c" stroke-width="0.6"/>
<path d="M8.4,217.8 L10.6,217.8 M9.5,216.70000000000002 L9.5,218.9" stroke="#202020" stroke-width="0.6"/>
<text x="25.4" y="220.0" font-size="6.3" fill="#000" textLength="16.4" lengthAdjust="spacingAndGlyphs"  stroke="#000" stroke-width="0.12">Planes</text>
<path d="M15.0,214.60000000000002 L21.8,221.20000000000002" fill="none" stroke="#000" stroke-width="0.8" stroke-dasharray="1.2 0.8"/>
<path d="M16.6,218.00000000000003 L19.2,215.8 L21.0,218.20000000000002 L18.4,220.4 Z" fill="#f6f250" stroke="#c8c020" stroke-width="0.4"/>
<rect x="7.5" y="223.8" width="4" height="4" fill="#fff" stroke="#8c8c8c" stroke-width="0.6"/>
<path d="M8.4,225.8 L10.6,225.8 M9.5,224.70000000000002 L9.5,226.9" stroke="#202020" stroke-width="0.6"/>
<text x="25.4" y="228.0" font-size="6.3" fill="#000" textLength="17.6" lengthAdjust="spacingAndGlyphs"  stroke="#000" stroke-width="0.12">Frames</text>
<rect x="14.6" y="222.20000000000002" width="7.4" height="7.2" fill="#f6f250" />
<path d="M16.4,223.20000000000002 L16.4,228.20000000000002 L21.2,228.20000000000002 M16.6,227.8 L19.6,225.20000000000002" fill="none" stroke="#000" stroke-width="0.9"/>
<text x="25.4" y="236.0" font-size="6.3" fill="#000" textLength="39.0" lengthAdjust="spacingAndGlyphs"  stroke="#000" stroke-width="0.12">Triangle Meshes</text>
<rect x="15.0" y="230.4" width="7" height="7" fill="#f6f250" stroke="#000" stroke-width="0.9"/>
<rect x="17.0" y="232.4" width="3" height="3" fill="#a8b0ff" stroke="#3040d0" stroke-width="0.5"/>
<text x="25.4" y="244.0" font-size="6.3" fill="#000" textLength="26.6" lengthAdjust="spacingAndGlyphs"  stroke="#000" stroke-width="0.12">Wireframes</text>
<rect x="15.0" y="238.60000000000002" width="6.4" height="5.2" fill="#f6f250" stroke="#000" stroke-width="0.8"/>
<path d="M16.6,245.20000000000002 L21.2,238.8" stroke="#e020c0" stroke-width="1.1"/><path d="M15.6,243.8 L18.0,245.4" stroke="#000" stroke-width="0.9"/>
<text x="25.4" y="252.0" font-size="6.3" fill="#000" textLength="21.4" lengthAdjust="spacingAndGlyphs"  stroke="#000" stroke-width="0.12">Contours</text>
<path d="M15.2,253.60000000000002 L15.2,248.8 C16.2,246.4 20.6,246.4 21.6,248.8 L21.6,253.60000000000002 Z" fill="#f8d020" stroke="#e03010" stroke-width="0.9"/>
<rect x="17.0" y="249.20000000000002" width="1.2" height="4" fill="#e03010" />
<rect x="19.0" y="249.20000000000002" width="1.2" height="4" fill="#e03010" />
</g>
<rect x="2.0" y="253.0" width="102.4" height="0.6" fill="#e2e2e2" />
<rect x="2" y="255.0" width="95" height="5.8" fill="url(#gHdr)" />
<text x="3.0" y="259.9" font-size="5.8" fill="#35465f" textLength="25.2" lengthAdjust="spacingAndGlyphs"  stroke="#35465f" stroke-width="0.08">Properties</text>
<path d="M99.6,256.2 L102.8,259.6 M102.8,256.2 L99.6,259.6" stroke="#101010" stroke-width="0.95" fill="none"/>
<rect x="2.6" y="262.8" width="101.8" height="143.6" fill="#f0f0f0" />
<rect x="2.0" y="262.0" width="102.6" height="0.8" fill="#6e6e6e" />
<rect x="2.0" y="262.0" width="0.8" height="144.6" fill="#6a6a6a" />
<rect x="2.8" y="271.0" width="101.4" height="0.7" fill="#8c8c8c" />
<rect x="2.8" y="271.7" width="101.4" height="0.6" fill="#ffffff" />
<rect x="2.0" y="406.4" width="102.6" height="0.7" fill="#ffffff" />
<rect x="104.2" y="262.6" width="0.5" height="144" fill="#fdfdfd" />
<rect x="95.2" y="263.4" width="6.8" height="7.2" fill="#f2f2ee" />
<rect x="101.6" y="263.4" width="0.7" height="7.4" fill="#404040" />
<rect x="95.0" y="270.3" width="7.3" height="0.7" fill="#404040" />
<circle cx="98.4" cy="265.8" r="1.7" fill="#d8d000" stroke="#3a3a10" stroke-width="0.6"/><rect x="97.6" y="267.2" width="1.6" height="2.6" fill="#505010"/>
<rect x="2" y="411.0" width="95" height="5.8" fill="url(#gHdr)" />
<text x="3.0" y="415.9" font-size="5.8" fill="#35465f" textLength="30.4" lengthAdjust="spacingAndGlyphs"  stroke="#35465f" stroke-width="0.08">Selection Set</text>
<path d="M99.6,412.2 L102.8,415.6 M102.8,412.2 L99.6,415.6" stroke="#101010" stroke-width="0.95" fill="none"/>
<rect x="2.0" y="418.2" width="102.6" height="0.7" fill="#6e6e6e" />
<rect x="2.0" y="418.2" width="0.8" height="95" fill="#6e6e6e" />
<rect x="2.8" y="418.9" width="101.6" height="94.6" fill="#f0f0f0" />
<rect x="5.8" y="419.8" width="10.6" height="9.4" fill="#f2f2f2" />
<rect x="5.8" y="419.8" width="10.6" height="0.5" fill="#ffffff" />
<rect x="5.8" y="419.8" width="0.5" height="9.4" fill="#ffffff" />
<rect x="16.0" y="419.8" width="0.6" height="9.6" fill="#707070" />
<rect x="5.8" y="428.8" width="10.8" height="0.6" fill="#707070" />
<rect x="17.6" y="419.8" width="10.6" height="9.4" fill="#f2f2f2" />
<rect x="17.6" y="419.8" width="10.6" height="0.5" fill="#ffffff" />
<rect x="17.6" y="419.8" width="0.5" height="9.4" fill="#ffffff" />
<rect x="27.8" y="419.8" width="0.6" height="9.6" fill="#707070" />
<rect x="17.6" y="428.8" width="10.8" height="0.6" fill="#707070" />
<rect x="29.4" y="419.8" width="10.6" height="9.4" fill="#f2f2f2" />
<rect x="29.4" y="419.8" width="10.6" height="0.5" fill="#ffffff" />
<rect x="29.4" y="419.8" width="0.5" height="9.4" fill="#ffffff" />
<rect x="39.599999999999994" y="419.8" width="0.6" height="9.6" fill="#707070" />
<rect x="29.4" y="428.8" width="10.8" height="0.6" fill="#707070" />
<rect x="41.2" y="419.8" width="10.6" height="9.4" fill="#f2f2f2" />
<rect x="41.2" y="419.8" width="10.6" height="0.5" fill="#ffffff" />
<rect x="41.2" y="419.8" width="0.5" height="9.4" fill="#ffffff" />
<rect x="51.400000000000006" y="419.8" width="0.6" height="9.6" fill="#707070" />
<rect x="41.2" y="428.8" width="10.8" height="0.6" fill="#707070" />
<rect x="53.0" y="419.8" width="10.6" height="9.4" fill="#f2f2f2" />
<rect x="53.0" y="419.8" width="10.6" height="0.5" fill="#ffffff" />
<rect x="53.0" y="419.8" width="0.5" height="9.4" fill="#ffffff" />
<rect x="63.2" y="419.8" width="0.6" height="9.6" fill="#707070" />
<rect x="53.0" y="428.8" width="10.8" height="0.6" fill="#707070" />
<path d="M8.2,421.6 h5.8 v5.8 h-5.8 Z M10.1,421.6 v5.8 M12.1,421.6 v5.8" fill="none" stroke="#202020" stroke-width="0.9"/>
<path d="M22.8,427.4 V422.2 M20.8,424.2 L22.8,422 L24.8,424.2" fill="none" stroke="#707070" stroke-width="0.8"/>
<path d="M34.6,422 V427.2 M32.6,425.2 L34.6,427.4 L36.6,425.2" fill="none" stroke="#707070" stroke-width="0.8"/>
<path d="M43.8,421.8 L49.2,427.4 M49.2,421.8 L43.8,427.4" fill="none" stroke="#808080" stroke-width="0.8"/>
<path d="M55.4,421.6 h5.8 v6 h-5.8 Z M55.8,422 L60.8,427.2 M60.8,422 L55.8,427.2" fill="none" stroke="#808080" stroke-width="0.8"/>
<text x="65.8" y="427.0" font-size="5.6" fill="#101010" textLength="22.6" lengthAdjust="spacingAndGlyphs"  stroke="#101010" stroke-width="0.2">0 Entities</text>
<rect x="5.4" y="431.6" width="98.6" height="79.4" fill="#ffffff" />
<rect x="4.8" y="430.8" width="99.6" height="0.8" fill="#6e6e6e" />
<rect x="4.8" y="430.8" width="0.8" height="80.6" fill="#6a6a6a" />
<rect x="5.6" y="431.6" width="98.6" height="7.6" fill="#f4f4f4" />
<rect x="5.6" y="439.2" width="98.6" height="0.7" fill="#7a7a7a" />
<rect x="61.2" y="432.0" width="0.7" height="7.2" fill="#8a8a8a" />
<rect x="61.9" y="432.0" width="0.6" height="7.2" fill="#ffffff" />
<text x="9.0" y="438.0" font-size="5.6" fill="#101010" textLength="14.6" lengthAdjust="spacingAndGlyphs"  stroke="#101010" stroke-width="0.2">Name</text>
<text x="66.2" y="438.0" font-size="5.6" fill="#101010" textLength="12.2" lengthAdjust="spacingAndGlyphs"  stroke="#101010" stroke-width="0.2">Type</text>
<rect x="5.6" y="505.4" width="98.6" height="5.6" fill="#f2f2f2" />
<linearGradient id="gThumbH" x1="0" y1="0" x2="0" y2="1"><stop offset="0" stop-color="#f6f6f6"/><stop offset="1" stop-color="#b8b8bc"/></linearGradient>
<rect x="10.0" y="505.8" width="78.6" height="4.8" fill="url(#gThumbH)" rx="0.8" stroke="#b8b8b8" stroke-width="0.3"/>
<path d="M8.0,506.8 L6.4,508.2 L8.0,509.6 Z" fill="#202020"/>
<path d="M99.4,506.8 L101,508.2 L99.4,509.6 Z" fill="#202020"/>
<rect x="47.4" y="507" width="3.6" height="2.6" fill="#9a9a9a" />
<rect x="4.8" y="511.2" width="99.6" height="0.6" fill="#ffffff" />
<path d="M9.6,22.6 L13.4,22.6 L15.5,24.8 L15.5,28.5 L9.6,28.5 Z" fill="#ffffff" stroke="#101010" stroke-width="0.9" stroke-linejoin="round"/>
<path d="M13.2,22.8 L13.2,25 L15.3,25" fill="none" stroke="#101010" stroke-width="0.7" />
<path d="M19.9,28.4 L19.9,24.2 L22,24.2 L22.8,25 L26,25 L26,28.4 Z" fill="#c8c020" stroke="#101010" stroke-width="0.8" />
<path d="M19.9,28.4 L21.6,26 L27.6,26 L26,28.4 Z" fill="#e8e060" stroke="#101010" stroke-width="0.7" />
<path d="M24.4,23.2 C25.4,22.4 26.6,22.6 27.4,23.6 M27.6,22.6 L27.5,24 L26.2,23.8" fill="none" stroke="#101010" stroke-width="0.7" />
<path d="M32.2,22.8 L38.4,22.8 L38.4,28.6 L32.2,28.6 Z" fill="#e4e4e4" stroke="#8c8c8c" stroke-width="0.9" />
<rect x="33.6" y="23.2" width="3.6" height="2.4" fill="#f4f4f4" stroke="#9a9a9a" stroke-width="0.5"/>
<rect x="33.8" y="26.6" width="3.2" height="2.0" fill="#a0a0a0" />
<rect x="36" y="27" width="0.9" height="1.4" fill="#e8e8e8" />
<rect x="54.2" y="23.2" width="5.6" height="5.4" fill="#e4f6f6" />
<path d="M55,24 L59,28 M59,24 L55,28" fill="none" stroke="#ff4444" stroke-width="0.95" />
<path d="M59.7,30.0 L62.0,27.7 L62.0,30.0 Z" fill="#000" stroke="none" stroke-width="1" />
<path d="M65.4,28.2 C66,25 67.4,25.6 68.6,26 C70.4,26.4 71,25 71.8,23.2" fill="none" stroke="#101010" stroke-width="0.9" />
<circle cx="69.6" cy="25.9" r="1.25" fill="#00e000" stroke="none" stroke-width="1"/>
<path d="M71.10000000000001,30.0 L73.4,27.7 L73.4,30.0 Z" fill="#000" stroke="none" stroke-width="1" />
<path d="M76.2,24.2 L79.2,22.4 L84,24.599999999999998 L81.4,29.6 L79,29.4 Z" fill="#f4fafa" stroke="#909090" stroke-width="0.7" stroke-linejoin="round"/>
<circle cx="78.8" cy="25.8" r="1.15" fill="#ff0000" stroke="none" stroke-width="1"/>
<path d="M82.5,30.0 L84.8,27.7 L84.8,30.0 Z" fill="#000" stroke="none" stroke-width="1" />
<path d="M87.4,24.2 L90.4,22.4 L95.2,24.599999999999998 L92.60000000000001,29.6 L90.2,29.4 Z" fill="#f4faf4" stroke="#707070" stroke-width="0.7" stroke-linejoin="round"/>
<circle cx="91" cy="26" r="1.2" fill="#ff00ff" stroke="none" stroke-width="1"/>
<path d="M88.4,23.2 L90,24.8" fill="none" stroke="#208020" stroke-width="0.6" />
<path d="M93.7,30.0 L96.0,27.7 L96.0,30.0 Z" fill="#000" stroke="none" stroke-width="1" />
<path d="M100.2,28.6 C100.6,26 101.6,24.8 102.6,25.4 C103.8,26.4 104.6,26.8 105.2,25.4 C105.8,24.2 106.2,23.4 106.4,22.8" fill="none" stroke="#2020ff" stroke-width="1.2" />
<path d="M105.10000000000001,30.2 L107.4,27.9 L107.4,30.2 Z" fill="#000" stroke="none" stroke-width="1" />
<path d="M110.8,24.2 L113.8,22.4 L118.6,24.599999999999998 L116.0,29.6 L113.6,29.4 Z" fill="#fafaf0" stroke="#a8a8a0" stroke-width="0.7" stroke-linejoin="round"/>
<path d="M112.4,22.8 C114.6,23.6 112.6,25.6 114,26.6 C115,27.2 115.2,28 115.2,29" fill="none" stroke="#2020ff" stroke-width="1.0" />
<path d="M116.5,30.0 L118.8,27.7 L118.8,30.0 Z" fill="#000" stroke="none" stroke-width="1" />
<path d="M122.2,24.2 L125.2,22.4 L130,24.599999999999998 L127.4,29.6 L125,29.4 Z" fill="#b8f4f8" stroke="#2828ff" stroke-width="0.9" stroke-linejoin="round"/>
<path d="M124.6,23.2 L126.4,29 M126.4,22.8 L127.8,28.6 M128.4,23.2 L129,27" fill="none" stroke="#00d0e8" stroke-width="1.1" />
<path d="M123.4,24.6 L125.6,29.2" fill="none" stroke="#e08080" stroke-width="0.6" />
<path d="M128.1,30.0 L130.4,27.7 L130.4,30.0 Z" fill="#000" stroke="none" stroke-width="1" />
<path d="M133.39999999999998,24.2 L136.39999999999998,22.4 L141.2,24.599999999999998 L138.6,29.6 L136.2,29.4 Z" fill="#fdfdf0" stroke="#2828ff" stroke-width="0.9" stroke-linejoin="round"/>
<path d="M136,23.6 L137.6,28.4 L139.4,24.2" fill="none" stroke="#e8e090" stroke-width="0.6" />
<path d="M139.5,30.0 L141.8,27.7 L141.8,30.0 Z" fill="#000" stroke="none" stroke-width="1" />
<path d="M145.4,23.1 L147.6,22.7 L149,23.7 L150.6,22.7 L152.6,23.3 L151.8,25.9 L152.6,28.9 L150.6,29.5 L149,28.5 L147.4,29.5 L145.4,28.9 L146.2,25.9 Z" fill="#f2f000" stroke="#101000" stroke-width="0.9" stroke-linejoin="round" stroke-dasharray="1.3 0.6"/>
<circle cx="149" cy="25.8" r="1.1" fill="#fafad0" stroke="none" stroke-width="1"/>
<path d="M151.5,30.2 L153.8,27.9 L153.8,30.2 Z" fill="#000" stroke="none" stroke-width="1" />
<rect x="156.6" y="22.599999999999998" width="6.4" height="6.2" fill="#f2f000" stroke="#101040" stroke-width="0.9" stroke-dasharray="1.5 0.5"/>
<rect x="158.89999999999998" y="24.7" width="2" height="2" fill="#b8b8f0" />
<path d="M162.89999999999998,30.2 L165.2,27.9 L165.2,30.2 Z" fill="#000" stroke="none" stroke-width="1" />
<path d="M168.6,25.4 L170.8,23.2 L176,23.2 L176,27.4 L173.8,29.6 L168.6,29.6 Z" fill="#00e0e0" stroke="#101010" stroke-width="0.6" />
<path d="M168.6,29.6 L168.6,25.4 L170.8,23.2 L174,23" fill="none" stroke="#ff6060" stroke-width="0.7" />
<path d="M170.4,26 L173.6,26" fill="none" stroke="#ffffff" stroke-width="0.7" />
<path d="M173.8,25.4 L176,23.2 M173.8,25.4 L173.8,29.6" fill="none" stroke="#104040" stroke-width="0.5" />
<path d="M175.29999999999998,30.2 L177.6,27.9 L177.6,30.2 Z" fill="#000" stroke="none" stroke-width="1" />
<path d="M181.6,23.2 C183,22 186.4,22.2 187.4,23.8 C188.4,25.6 187.6,28.4 185.6,29 C183.4,29.6 180.8,28.6 180.4,26.4 C180.2,25 180.6,24 181.6,23.2 Z" fill="#f0d8f0" stroke="#2828ff" stroke-width="0.9" />
<rect x="183" y="24" width="3.2" height="4" fill="#ff9070" />
<path d="M184.6,24 L184.6,28" fill="none" stroke="#ffe0a0" stroke-width="0.7" />
<path d="M186.7,30.2 L189.0,27.9 L189.0,30.2 Z" fill="#000" stroke="none" stroke-width="1" />
<path d="M195.6,25.5 L199.0,22.4 L202.6,25.7 L199.2,28.9 Z" fill="#22e022" stroke="#404040" stroke-width="0.7" />
<path d="M198.0,25.5 L199.1,24.4 L200.29999999999998,25.599999999999998 L199.2,26.7 Z" fill="#e0e8e0" stroke="#208020" stroke-width="0.4" />
<path d="M195.2,21.599999999999998 L197.2,23.799999999999997" fill="none" stroke="#303030" stroke-width="0.7" />
<path d="M201.7,30.2 L204.0,27.9 L204.0,30.2 Z" fill="#000" stroke="none" stroke-width="1" />
<path d="M208.4,24.2 L210.8,24.6 M208.4,24.2 L209,26.4 M208.6,24.4 L211.4,26.6 M212,26.2 L213.2,27.4" fill="none" stroke="#101010" stroke-width="0.8" />
<path d="M213.29999999999998,30.0 L215.6,27.7 L215.6,30.0 Z" fill="#000" stroke="none" stroke-width="1" />
<rect x="227" y="20.4" width="11.4" height="11.8" fill="#fbfbfb" />
<rect x="227" y="20.4" width="11.4" height="0.6" fill="#a8a8a8" />
<rect x="227" y="20.4" width="0.65" height="11.8" fill="#9c9c9c" />
<rect x="227" y="31.700000000000003" width="11.4" height="0.5" fill="#ffffff" />
<rect x="237.9" y="20.4" width="0.5" height="11.8" fill="#dcdcdc" />
<rect x="238.8" y="20.4" width="11.4" height="11.8" fill="#fbfbfb" />
<rect x="238.8" y="20.4" width="11.4" height="0.6" fill="#a8a8a8" />
<rect x="238.8" y="20.4" width="0.65" height="11.8" fill="#9c9c9c" />
<rect x="238.8" y="31.700000000000003" width="11.4" height="0.5" fill="#ffffff" />
<rect x="249.70000000000002" y="20.4" width="0.5" height="11.8" fill="#dcdcdc" />
<rect x="250.6" y="20.4" width="11.4" height="11.8" fill="#fbfbfb" />
<rect x="250.6" y="20.4" width="11.4" height="0.6" fill="#a8a8a8" />
<rect x="250.6" y="20.4" width="0.65" height="11.8" fill="#9c9c9c" />
<rect x="250.6" y="31.700000000000003" width="11.4" height="0.5" fill="#ffffff" />
<rect x="261.5" y="20.4" width="0.5" height="11.8" fill="#dcdcdc" />
<rect x="229" y="22.8" width="8.4" height="7.4" fill="#ffffff" stroke="#101010" stroke-width="0.9"/>
<rect x="229.4" y="23.2" width="7.6" height="1.5" fill="#2040d8" />
<rect x="229.2" y="22.2" width="8" height="0.6" fill="#f4f0a0" />
<path d="M231.4,25.4 L231.4,29.4 M231.4,26 L236,26 L236,27.6 L233.4,27.6" fill="none" stroke="#101010" stroke-width="0.9" />
<rect x="240.6" y="22.8" width="8.4" height="7.4" fill="#ffffff" stroke="#101010" stroke-width="0.9"/>
<rect x="241.0" y="23.2" width="7.6" height="1.5" fill="#2040d8" />
<rect x="240.79999999999998" y="22.2" width="8" height="0.6" fill="#f4f0a0" />
<rect x="241.2" y="25.2" width="7.2" height="4.4" fill="#b0b0b0" />
<path d="M243.2,25 L243.2,29.8 M245.8,25 L245.8,29.8 M241,26.6 L249,26.6" fill="none" stroke="#606060" stroke-width="0.6" />
<rect x="252" y="22.8" width="8.4" height="7.4" fill="#ffffff" stroke="#101010" stroke-width="0.9"/>
<rect x="252.4" y="23.2" width="7.6" height="1.5" fill="#2040d8" />
<rect x="252.2" y="22.2" width="8" height="0.6" fill="#f4f0a0" />
<rect x="252.6" y="25.2" width="7.2" height="4.4" fill="#a8a8a8" />
<path d="M254.6,25 L254.6,29.8 M252.4,26.6 L260,26.6" fill="none" stroke="#606060" stroke-width="0.5" />
<path d="M256.4,24.4 L256.4,30 L257.8,28.8 L258.8,30.8 L259.6,30.4 L258.8,28.6 L260.2,28.4 Z" fill="#00e8f0" stroke="#00c0d0" stroke-width="0.3" />
<rect x="263.2" y="22.6" width="8.2" height="7.6" fill="#10109a" stroke="#101010" stroke-width="0.6"/>
<rect x="263.6" y="23" width="7.4" height="1.8" fill="#2040e0" />
<rect x="263.8" y="27" width="3" height="3" fill="#909090" />
<path d="M268.4,24 L268.4,29 M266,26.4 L271,26.4" fill="none" stroke="#00e0f0" stroke-width="1.5" />
<rect x="274.8" y="22.6" width="8.2" height="7.6" fill="#80d8e0" stroke="#101010" stroke-width="0.6"/>
<rect x="275.2" y="23" width="7.4" height="1.8" fill="#2040c8" />
<path d="M278.9,24.6 C276,24.6 276.2,27.6 278.9,30 C281.6,27.6 281.8,24.6 278.9,24.6 Z" fill="#ff1010" stroke="#c00000" stroke-width="0.3" />
<rect x="278.5" y="25.4" width="0.9" height="2.8" fill="#ffffff" />
<path d="M297.6,24 L304.2,24 M297.6,27.4 L304.2,27.4 M299.2,23 L300,28.6 M302.6,23 L301.8,28.6" fill="none" stroke="#9a9a9a" stroke-width="1.0" />
<rect x="308.4" y="22.3" width="3.3" height="6.8" fill="#20e0e8" />
<path d="M310,22.3 L310,29" fill="none" stroke="#60f0f0" stroke-width="0.6" />
<path d="M312.6,25.2 L312.6,28.8 L313.5,28.099999999999998 L314.5,29.799999999999997 L315.20000000000005,29.4 L314.3,27.8 L315.5,27.7 Z" fill="#fff" stroke="#000" stroke-width="0.7" />
<rect x="320.2" y="22.6" width="1.3" height="5.6" fill="#b4b4b4" />
<rect x="322.2" y="22.6" width="1.3" height="5.6" fill="#b4b4b4" />
<path d="M324.4,25.2 L324.4,28.8 L325.29999999999995,28.099999999999998 L326.29999999999995,29.799999999999997 L327.0,29.4 L326.09999999999997,27.8 L327.29999999999995,27.7 Z" fill="#fff" stroke="#a0a0a0" stroke-width="0.7" />
<rect x="331.6" y="23.4" width="1.3" height="5" fill="#b8b8b8" />
<rect x="333.6" y="23.4" width="1.3" height="5" fill="#b8b8b8" />
<path d="M335.6,25.4 L335.6,29.0 L336.5,28.299999999999997 L337.5,30.0 L338.20000000000005,29.599999999999998 L337.3,28.0 L338.5,27.9 Z" fill="#fff" stroke="#a8a8a8" stroke-width="0.7" />
<path d="M342.6,22.6 L350.8,22.6 L351,25.4 L348.6,27 L344,26.6 L342.4,25 Z" fill="#ffffff" stroke="#101010" stroke-width="0.9" stroke-linejoin="round"/>
<path d="M344.4,24.4 L346,24.4 L346,25.6 M347.2,24.4 L348.6,24.4 L348.8,26" fill="none" stroke="#101010" stroke-width="0.6" />
<path d="M347.6,26.6 L350,29.6" fill="none" stroke="#101010" stroke-width="1.0" />
<rect x="363.2" y="20.4" width="11.4" height="11.8" fill="#fbfbfb" />
<rect x="363.2" y="20.4" width="11.4" height="0.6" fill="#a8a8a8" />
<rect x="363.2" y="20.4" width="0.65" height="11.8" fill="#9c9c9c" />
<rect x="363.2" y="31.700000000000003" width="11.4" height="0.5" fill="#ffffff" />
<rect x="374.09999999999997" y="20.4" width="0.5" height="11.8" fill="#dcdcdc" />
<path d="M366.6,22.6 L366.6,28.8 L368.1,27.5 L369.3,29.900000000000002 L370.3,29.400000000000002 L369.20000000000005,27.1 L371.20000000000005,27.0 Z" fill="#fff" stroke="#000" stroke-width="0.9" stroke-linejoin="miter"/>
<rect x="376.8" y="24.2" width="1.5" height="0.8" fill="#b0b0b8" />
<rect x="376.8" y="26.7" width="1.5" height="0.8" fill="#b0b0b8" />
<rect x="376.8" y="29.2" width="1.5" height="0.8" fill="#b0b0b8" />
<rect x="379.6" y="24.2" width="1.5" height="0.8" fill="#b0b0b8" />
<rect x="379.6" y="26.7" width="1.5" height="0.8" fill="#b0b0b8" />
<rect x="379.6" y="29.2" width="1.5" height="0.8" fill="#b0b0b8" />
<rect x="382.40000000000003" y="24.2" width="1.5" height="0.8" fill="#b0b0b8" />
<rect x="382.40000000000003" y="26.7" width="1.5" height="0.8" fill="#b0b0b8" />
<rect x="382.40000000000003" y="29.2" width="1.5" height="0.8" fill="#b0b0b8" />
<circle cx="378" cy="24.4" r="1.35" fill="#f8f000" stroke="none" stroke-width="1"/>
<rect x="388.2" y="24.2" width="1.5" height="0.8" fill="#b0b0b8" />
<rect x="388.2" y="26.7" width="1.5" height="0.8" fill="#b0b0b8" />
<rect x="388.2" y="29.2" width="1.5" height="0.8" fill="#b0b0b8" />
<rect x="391.0" y="24.2" width="1.5" height="0.8" fill="#b0b0b8" />
<rect x="391.0" y="26.7" width="1.5" height="0.8" fill="#b0b0b8" />
<rect x="391.0" y="29.2" width="1.5" height="0.8" fill="#b0b0b8" />
<rect x="393.8" y="24.2" width="1.5" height="0.8" fill="#b0b0b8" />
<rect x="393.8" y="26.7" width="1.5" height="0.8" fill="#b0b0b8" />
<rect x="393.8" y="29.2" width="1.5" height="0.8" fill="#b0b0b8" />
<rect x="388" y="23.7" width="3.4" height="1.3" fill="#f8f000" />
<rect x="399.6" y="24.2" width="1.5" height="0.8" fill="#b0b0b8" />
<rect x="399.6" y="26.7" width="1.5" height="0.8" fill="#b0b0b8" />
<rect x="399.6" y="29.2" width="1.5" height="0.8" fill="#b0b0b8" />
<rect x="402.40000000000003" y="24.2" width="1.5" height="0.8" fill="#b0b0b8" />
<rect x="402.40000000000003" y="26.7" width="1.5" height="0.8" fill="#b0b0b8" />
<rect x="402.40000000000003" y="29.2" width="1.5" height="0.8" fill="#b0b0b8" />
<rect x="405.20000000000005" y="24.2" width="1.5" height="0.8" fill="#b0b0b8" />
<rect x="405.20000000000005" y="26.7" width="1.5" height="0.8" fill="#b0b0b8" />
<rect x="405.20000000000005" y="29.2" width="1.5" height="0.8" fill="#b0b0b8" />
<path d="M399,25.6 L407,25.6 M401,22.4 L401,29.6" fill="none" stroke="#f0e800" stroke-width="0.8" />
<circle cx="400.8" cy="23.6" r="0.9" fill="#ff2020" stroke="none" stroke-width="1"/>
<path d="M405.4,22.6 L405.4,28.6 M404.2,27 L405.4,29 L406.6,27" fill="none" stroke="#3030a0" stroke-width="0.8" />
<path d="M421.4,28 L425.6,22.8 L428.4,27.6 Z M421.4,28 L428.8,28" fill="none" stroke="#9a9a9a" stroke-width="0.9" />
<path d="M425,25 L426.6,27.6" fill="none" stroke="#9a9a9a" stroke-width="0.7" />
<path d="M432.4,26 L440.6,26 M432.6,26 L434.6,24.4 M432.6,26 L434.6,27.6 M436.4,24.2 L436.4,27.8 M438.4,24.4 L440.4,27.6 M440.4,24.4 L438.4,27.6" fill="none" stroke="#9c9c9c" stroke-width="0.9" />
<rect x="443.6" y="25.4" width="8.8" height="1.4" fill="#b0b060" />
<circle cx="444.6" cy="26.1" r="1.05" fill="#ff2020" stroke="none" stroke-width="1"/>
<circle cx="446.6" cy="26.1" r="1.0" fill="#f8f000" stroke="none" stroke-width="1"/>
<circle cx="449.4" cy="26.1" r="1.0" fill="#f8f000" stroke="none" stroke-width="1"/>
<circle cx="451.4" cy="26.1" r="1.05" fill="#ff2020" stroke="none" stroke-width="1"/>
<path d="M459.4,23.6 L463.6,23.6 L462.6,25.4 L462.6,28.6 M464.6,23.8 L466.6,23.8 M464.8,28.2 L466.6,28.2 M460.4,25.4 L461.6,26.8" fill="none" stroke="#b0b0b0" stroke-width="0.9" />
<rect x="482" y="22.8" width="6.8" height="6.6" fill="#a0a0a0" />
<path d="M482,24.6 L488.8,24.6 M482,26.4 L488.8,26.4 M482,28 L488.8,28 M484.4,22.8 L484.4,29.4 M486.6,22.8 L486.6,29.4" fill="none" stroke="#888888" stroke-width="0.4" />
<path d="M494.6,23 L496.6,25 M496.6,23 L494.6,25" fill="none" stroke="#ff2020" stroke-width="0.8" />
<circle cx="499.6" cy="28.4" r="1.35" fill="#ff0000" stroke="none" stroke-width="1"/>
<path d="M496.40000000000003,26.799999999999997 C496.6,28.4 497.6,28.599999999999998 498.8,28.4" fill="none" stroke="#ff0000" stroke-width="0.8" />
<path d="M504.6,27.8 C505,25.4 506,24.6 507,25.2 C508,26 508.6,26 509.4,24.6 C510,23.4 510.4,23 510.8,22.4" fill="none" stroke="#2020ff" stroke-width="1.2" />
<circle cx="510.6" cy="28.4" r="1.35" fill="#ff0000" stroke="none" stroke-width="1"/>
<path d="M507.40000000000003,26.799999999999997 C507.6,28.4 508.6,28.599999999999998 509.8,28.4" fill="none" stroke="#ff0000" stroke-width="0.8" />
<path d="M515.4000000000001,24.2 L518.4000000000001,22.4 L523.2,24.599999999999998 L520.6,29.6 L518.2,29.4 Z" fill="#fdfdf4" stroke="#2828ff" stroke-width="0.9" stroke-linejoin="round"/>
<path d="M517.4,24.4 L519,27.6" fill="none" stroke="#e0a060" stroke-width="0.6" />
<circle cx="522" cy="28.4" r="1.35" fill="#ff0000" stroke="none" stroke-width="1"/>
<path d="M518.8,26.799999999999997 C519,28.4 520,28.599999999999998 521.2,28.4" fill="none" stroke="#ff0000" stroke-width="0.8" />
<path d="M528.0,23.0 L530.2,22.599999999999998 L531.6,23.599999999999998 L533.2,22.599999999999998 L535.2,23.2 L534.4,25.799999999999997 L535.2,28.799999999999997 L533.2,29.4 L531.6,28.4 L530.0,29.4 L528.0,28.799999999999997 L528.8000000000001,25.799999999999997 Z" fill="#f2f000" stroke="#101000" stroke-width="0.9" stroke-linejoin="round" stroke-dasharray="1.3 0.6"/>
<circle cx="531.6" cy="25.7" r="1.1" fill="#fafad0" stroke="none" stroke-width="1"/>
<circle cx="533.8" cy="28.4" r="1.35" fill="#ff0000" stroke="none" stroke-width="1"/>
<path d="M530.5999999999999,26.799999999999997 C530.8,28.4 531.8,28.599999999999998 533.0,28.4" fill="none" stroke="#ff0000" stroke-width="0.8" />
<rect x="539.4" y="22.599999999999998" width="6.4" height="6.2" fill="#f2f000" stroke="#101040" stroke-width="0.9" stroke-dasharray="1.5 0.5"/>
<rect x="541.7" y="24.7" width="2" height="2" fill="#b8b8f0" />
<circle cx="542.7" cy="25.6" r="1.0" fill="#3030a0" stroke="none" stroke-width="1"/>
<circle cx="545.6" cy="28.4" r="1.35" fill="#ff0000" stroke="none" stroke-width="1"/>
<path d="M542.4,26.799999999999997 C542.6,28.4 543.6,28.599999999999998 544.8000000000001,28.4" fill="none" stroke="#ff0000" stroke-width="0.8" />
<path d="M550.2,25.700000000000003 L553.6,22.6 L557.2,25.900000000000002 L553.8000000000001,29.1 Z" fill="#22e022" stroke="#404040" stroke-width="0.7" />
<path d="M552.6,25.700000000000003 L553.7,24.6 L554.9000000000001,25.8 L553.8000000000001,26.900000000000002 Z" fill="#e0e8e0" stroke="#208020" stroke-width="0.4" />
<path d="M549.8000000000001,21.8 L551.8000000000001,24.0" fill="none" stroke="#303030" stroke-width="0.7" />
<circle cx="557" cy="28.4" r="1.35" fill="#ff0000" stroke="none" stroke-width="1"/>
<path d="M553.8,26.799999999999997 C554,28.4 555,28.599999999999998 556.2,28.4" fill="none" stroke="#ff0000" stroke-width="0.8" />
<path d="M563.4,23 L569,23 L569,28 L563.4,28 Z M566,23 L566,28 M563.4,25.4 L569,25.4 M563.4,28 L562.4,29.2" fill="none" stroke="#a8a8a8" stroke-width="0.8" />
<rect x="606.8" y="20.4" width="11.4" height="11.8" fill="#fbfbfb" />
<rect x="606.8" y="20.4" width="11.4" height="0.6" fill="#a8a8a8" />
<rect x="606.8" y="20.4" width="0.65" height="11.8" fill="#9c9c9c" />
<rect x="606.8" y="31.700000000000003" width="11.4" height="0.5" fill="#ffffff" />
<rect x="617.6999999999999" y="20.4" width="0.5" height="11.8" fill="#dcdcdc" />
<path d="M610.6,22.6 L610.6,28.8 L612.1,27.5 L613.3000000000001,29.900000000000002 L614.3000000000001,29.400000000000002 L613.2,27.1 L615.2,27.0 Z" fill="#fff" stroke="#000" stroke-width="0.9" stroke-linejoin="miter"/>
<path d="M620.4,22.6 L622.8,24.6 M622.8,22.6 L620.4,24.6" fill="none" stroke="#ff2020" stroke-width="0.8" />
<path d="M622.8,24.6 L625.0,25.0 L627.8,27.8 C628.4,29.200000000000003 627.1999999999999,30.200000000000003 625.8,29.8 L623.1999999999999,26.8 Z" fill="#181818" stroke="none" stroke-width="1" />
<circle cx="626.1999999999999" cy="28.400000000000002" r="1.0" fill="#10c0c8" stroke="none" stroke-width="1"/>
<path d="M623.8,25.6 L625.1999999999999,27.0" fill="none" stroke="#d0d0d0" stroke-width="0.6" />
<path d="M631.8,24.8 C632.4,22.8 633.4,22.6 634.2,23.4 C635,24.2 636,24 636.8,22.4" fill="none" stroke="#2020ff" stroke-width="1.0" />
<path d="M633.6,23.2 L635.4,25" fill="none" stroke="#c0c040" stroke-width="0.7" />
<path d="M634.6,24.6 L636.8000000000001,25.0 L639.6,27.8 C640.2,29.200000000000003 639.0,30.200000000000003 637.6,29.8 L635.0,26.8 Z" fill="#181818" stroke="none" stroke-width="1" />
<circle cx="638.0" cy="28.400000000000002" r="1.0" fill="#10c0c8" stroke="none" stroke-width="1"/>
<path d="M635.6,25.6 L637.0,27.0" fill="none" stroke="#d0d0d0" stroke-width="0.6" />
<path d="M8,43.4 L14.6,37.4" fill="none" stroke="#181818" stroke-width="0.9" />
<path d="M8.2,38.6 L9,37.8 L9,40.4" fill="none" stroke="#181818" stroke-width="0.7" />
<rect x="12.200000000000001" y="39.7" width="3.6" height="0.7" fill="#f4c8b0" />
<path d="M11.4,40.2 L16.6,40.2 L16.4,41.400000000000006 L14.9,42.800000000000004 L14.9,44.400000000000006 L13.1,44.400000000000006 L13.1,42.800000000000004 L11.6,41.400000000000006 Z" fill="#080808" stroke="none" stroke-width="1" />
<rect x="13.3" y="40.300000000000004" width="1.5" height="1.5" fill="#10c8f0" />
<rect x="13.3" y="41.7" width="1.5" height="1.2" fill="#1848ff" />
<rect x="13.3" y="42.900000000000006" width="1.5" height="1.1" fill="#109038" />
<rect x="18.6" y="35.4" width="10.6" height="11.2" fill="#fbfbfb" />
<rect x="18.6" y="35.4" width="10.6" height="0.6" fill="#a8a8a8" />
<rect x="18.6" y="35.4" width="0.65" height="11.2" fill="#9c9c9c" />
<rect x="18.6" y="46.099999999999994" width="10.6" height="0.5" fill="#ffffff" />
<rect x="28.700000000000003" y="35.4" width="0.5" height="11.2" fill="#dcdcdc" />
<rect x="30.130000000000003" y="35.4" width="10.6" height="11.2" fill="#fbfbfb" />
<rect x="30.130000000000003" y="35.4" width="10.6" height="0.6" fill="#a8a8a8" />
<rect x="30.130000000000003" y="35.4" width="0.65" height="11.2" fill="#9c9c9c" />
<rect x="30.130000000000003" y="46.099999999999994" width="10.6" height="0.5" fill="#ffffff" />
<rect x="40.230000000000004" y="35.4" width="0.5" height="11.2" fill="#dcdcdc" />
<rect x="41.66" y="35.4" width="10.6" height="11.2" fill="#fbfbfb" />
<rect x="41.66" y="35.4" width="10.6" height="0.6" fill="#a8a8a8" />
<rect x="41.66" y="35.4" width="0.65" height="11.2" fill="#9c9c9c" />
<rect x="41.66" y="46.099999999999994" width="10.6" height="0.5" fill="#ffffff" />
<rect x="51.76" y="35.4" width="0.5" height="11.2" fill="#dcdcdc" />
<rect x="53.19" y="35.4" width="10.6" height="11.2" fill="#fbfbfb" />
<rect x="53.19" y="35.4" width="10.6" height="0.6" fill="#a8a8a8" />
<rect x="53.19" y="35.4" width="0.65" height="11.2" fill="#9c9c9c" />
<rect x="53.19" y="46.099999999999994" width="10.6" height="0.5" fill="#ffffff" />
<rect x="63.29" y="35.4" width="0.5" height="11.2" fill="#dcdcdc" />
<rect x="64.72" y="35.4" width="10.6" height="11.2" fill="#fbfbfb" />
<rect x="64.72" y="35.4" width="10.6" height="0.6" fill="#a8a8a8" />
<rect x="64.72" y="35.4" width="0.65" height="11.2" fill="#9c9c9c" />
<rect x="64.72" y="46.099999999999994" width="10.6" height="0.5" fill="#ffffff" />
<rect x="74.82" y="35.4" width="0.5" height="11.2" fill="#dcdcdc" />
<rect x="76.25" y="35.4" width="10.6" height="11.2" fill="#fbfbfb" />
<rect x="76.25" y="35.4" width="10.6" height="0.6" fill="#a8a8a8" />
<rect x="76.25" y="35.4" width="0.65" height="11.2" fill="#9c9c9c" />
<rect x="76.25" y="46.099999999999994" width="10.6" height="0.5" fill="#ffffff" />
<rect x="86.35" y="35.4" width="0.5" height="11.2" fill="#dcdcdc" />
<rect x="87.78" y="35.4" width="10.6" height="11.2" fill="#fbfbfb" />
<rect x="87.78" y="35.4" width="10.6" height="0.6" fill="#a8a8a8" />
<rect x="87.78" y="35.4" width="0.65" height="11.2" fill="#9c9c9c" />
<rect x="87.78" y="46.099999999999994" width="10.6" height="0.5" fill="#ffffff" />
<rect x="97.88" y="35.4" width="0.5" height="11.2" fill="#dcdcdc" />
<rect x="99.31" y="35.4" width="10.6" height="11.2" fill="#fbfbfb" />
<rect x="99.31" y="35.4" width="10.6" height="0.6" fill="#a8a8a8" />
<rect x="99.31" y="35.4" width="0.65" height="11.2" fill="#9c9c9c" />
<rect x="99.31" y="46.099999999999994" width="10.6" height="0.5" fill="#ffffff" />
<rect x="109.41" y="35.4" width="0.5" height="11.2" fill="#dcdcdc" />
<rect x="110.84" y="35.4" width="10.6" height="11.2" fill="#fbfbfb" />
<rect x="110.84" y="35.4" width="10.6" height="0.6" fill="#a8a8a8" />
<rect x="110.84" y="35.4" width="0.65" height="11.2" fill="#9c9c9c" />
<rect x="110.84" y="46.099999999999994" width="10.6" height="0.5" fill="#ffffff" />
<rect x="120.94" y="35.4" width="0.5" height="11.2" fill="#dcdcdc" />
<rect x="122.37" y="35.4" width="10.6" height="11.2" fill="#fbfbfb" />
<rect x="122.37" y="35.4" width="10.6" height="0.6" fill="#a8a8a8" />
<rect x="122.37" y="35.4" width="0.65" height="11.2" fill="#9c9c9c" />
<rect x="122.37" y="46.099999999999994" width="10.6" height="0.5" fill="#ffffff" />
<rect x="132.47" y="35.4" width="0.5" height="11.2" fill="#dcdcdc" />
<rect x="133.9" y="35.4" width="10.6" height="11.2" fill="#fbfbfb" />
<rect x="133.9" y="35.4" width="10.6" height="0.6" fill="#a8a8a8" />
<rect x="133.9" y="35.4" width="0.65" height="11.2" fill="#9c9c9c" />
<rect x="133.9" y="46.099999999999994" width="10.6" height="0.5" fill="#ffffff" />
<rect x="144.0" y="35.4" width="0.5" height="11.2" fill="#dcdcdc" />
<rect x="145.43" y="35.4" width="10.6" height="11.2" fill="#fbfbfb" />
<rect x="145.43" y="35.4" width="10.6" height="0.6" fill="#a8a8a8" />
<rect x="145.43" y="35.4" width="0.65" height="11.2" fill="#9c9c9c" />
<rect x="145.43" y="46.099999999999994" width="10.6" height="0.5" fill="#ffffff" />
<rect x="155.53" y="35.4" width="0.5" height="11.2" fill="#dcdcdc" />
<rect x="156.95999999999998" y="35.4" width="10.6" height="11.2" fill="#fbfbfb" />
<rect x="156.95999999999998" y="35.4" width="10.6" height="0.6" fill="#a8a8a8" />
<rect x="156.95999999999998" y="35.4" width="0.65" height="11.2" fill="#9c9c9c" />
<rect x="156.95999999999998" y="46.099999999999994" width="10.6" height="0.5" fill="#ffffff" />
<rect x="167.05999999999997" y="35.4" width="0.5" height="11.2" fill="#dcdcdc" />
<rect x="168.48999999999998" y="35.4" width="10.6" height="11.2" fill="#fbfbfb" />
<rect x="168.48999999999998" y="35.4" width="10.6" height="0.6" fill="#a8a8a8" />
<rect x="168.48999999999998" y="35.4" width="0.65" height="11.2" fill="#9c9c9c" />
<rect x="168.48999999999998" y="46.099999999999994" width="10.6" height="0.5" fill="#ffffff" />
<rect x="178.58999999999997" y="35.4" width="0.5" height="11.2" fill="#dcdcdc" />
<rect x="180.01999999999998" y="35.4" width="10.6" height="11.2" fill="#fbfbfb" />
<rect x="180.01999999999998" y="35.4" width="10.6" height="0.6" fill="#a8a8a8" />
<rect x="180.01999999999998" y="35.4" width="0.65" height="11.2" fill="#9c9c9c" />
<rect x="180.01999999999998" y="46.099999999999994" width="10.6" height="0.5" fill="#ffffff" />
<rect x="190.11999999999998" y="35.4" width="0.5" height="11.2" fill="#dcdcdc" />
<path d="M21.200000000000003,41.6 L24.200000000000003,45.0 M24.200000000000003,41.6 L21.200000000000003,45.0" fill="none" stroke="#ff5050" stroke-width="1.0" />
<rect x="23.6" y="37.3" width="3.6" height="0.7" fill="#f4c8b0" />
<path d="M22.8,37.8 L28.0,37.8 L27.8,39.0 L26.3,40.4 L26.3,42.0 L24.5,42.0 L24.5,40.4 L23.0,39.0 Z" fill="#080808" stroke="none" stroke-width="1" />
<rect x="24.7" y="37.9" width="1.5" height="1.5" fill="#10c8f0" />
<rect x="24.7" y="39.3" width="1.5" height="1.2" fill="#1848ff" />
<rect x="24.7" y="40.5" width="1.5" height="1.1" fill="#109038" />
<path d="M31.53,44.8 C32.13,42.6 33.13,42.6 34.13,43.4 C35.13,44 36.53,44.2 37.330000000000005,42.6 C37.93,41.4 38.53,41 39.13,40.4" fill="none" stroke="#3030ff" stroke-width="1.1" />
<rect x="35.13" y="37.3" width="3.6" height="0.7" fill="#f4c8b0" />
<path d="M34.330000000000005,37.8 L39.53000000000001,37.8 L39.330000000000005,39.0 L37.830000000000005,40.4 L37.830000000000005,42.0 L36.03000000000001,42.0 L36.03000000000001,40.4 L34.53000000000001,39.0 Z" fill="#080808" stroke="none" stroke-width="1" />
<rect x="36.230000000000004" y="37.9" width="1.5" height="1.5" fill="#10c8f0" />
<rect x="36.230000000000004" y="39.3" width="1.5" height="1.2" fill="#1848ff" />
<rect x="36.230000000000004" y="40.5" width="1.5" height="1.1" fill="#109038" />
<path d="M42.66,40.2 L45.66,38.400000000000006 L50.459999999999994,40.6 L47.85999999999999,45.6 L45.459999999999994,45.400000000000006 Z" fill="#fdfdf0" stroke="#e8e0a0" stroke-width="0.6" stroke-linejoin="round"/>
<path d="M44.26,38.6 C46.66,39.6 44.26,41.6 45.86,42.8 C47.059999999999995,43.6 47.26,44.4 47.26,45.4" fill="none" stroke="#2828ff" stroke-width="1.1" />
<rect x="47.059999999999995" y="37.3" width="3.6" height="0.7" fill="#f4c8b0" />
<path d="M46.26,37.8 L51.46,37.8 L51.26,39.0 L49.76,40.4 L49.76,42.0 L47.96,42.0 L47.96,40.4 L46.46,39.0 Z" fill="#080808" stroke="none" stroke-width="1" />
<rect x="48.16" y="37.9" width="1.5" height="1.5" fill="#10c8f0" />
<rect x="48.16" y="39.3" width="1.5" height="1.2" fill="#1848ff" />
<rect x="48.16" y="40.5" width="1.5" height="1.1" fill="#109038" />
<path d="M54.19,40 L57.19,38.2 L61.989999999999995,40.4 L59.38999999999999,45.4 L56.989999999999995,45.2 Z" fill="#fffff4" stroke="#2828ff" stroke-width="0.9" stroke-linejoin="round"/>
<path d="M56.589999999999996,40 L57.79,42.6" fill="none" stroke="#e0d890" stroke-width="0.6" />
<rect x="58.79" y="37.5" width="3.8" height="0.7" fill="#f0c8b0" />
<path d="M58.19,38.199999999999996 L63.19,38.199999999999996 L61.39,40.599999999999994 L61.39,42.0 L59.989999999999995,42.0 L59.989999999999995,40.599999999999994 Z" fill="#101010" stroke="none" stroke-width="1" />
<rect x="60.089999999999996" y="38.4" width="1.2" height="2.2" fill="#10b8f0" />
<circle cx="69.12" cy="42" r="3.3" fill="#f4f4ff" stroke="#2828ff" stroke-width="1.0"/>
<path d="M66.12,42.6 L70.72,42.2" fill="none" stroke="#2828ff" stroke-width="0.9" />
<rect x="67.72" y="40" width="2.4" height="2" fill="#c0c8ff" />
<rect x="70.11999999999999" y="37.5" width="3.8" height="0.7" fill="#f0c8b0" />
<path d="M69.52,38.199999999999996 L74.52,38.199999999999996 L72.72,40.599999999999994 L72.72,42.0 L71.32,42.0 L71.32,40.599999999999994 Z" fill="#101010" stroke="none" stroke-width="1" />
<rect x="71.42" y="38.4" width="1.2" height="2.2" fill="#10b8f0" />
<path d="M78.25,38.800000000000004 L80.44999999999999,38.400000000000006 L81.85,39.400000000000006 L83.44999999999999,38.400000000000006 L85.44999999999999,39.0 L84.64999999999999,41.6 L85.44999999999999,44.6 L83.44999999999999,45.2 L81.85,44.2 L80.25,45.2 L78.25,44.6 L79.05,41.6 Z" fill="#f2f000" stroke="#101000" stroke-width="0.9" stroke-linejoin="round" stroke-dasharray="1.3 0.6"/>
<circle cx="81.85" cy="41.5" r="1.1" fill="#fafad0" stroke="none" stroke-width="1"/>
<rect x="81.64999999999999" y="37.300000000000004" width="3.8" height="0.7" fill="#f0c8b0" />
<path d="M81.05,38.0 L86.05,38.0 L84.25,40.4 L84.25,41.800000000000004 L82.85,41.800000000000004 L82.85,40.4 Z" fill="#101010" stroke="none" stroke-width="1" />
<rect x="82.95" y="38.2" width="1.2" height="2.2" fill="#10b8f0" />
<rect x="89.38" y="38.4" width="7" height="6.6" fill="#f2f000" stroke="#101010" stroke-width="1"/>
<rect x="91.58" y="40.6" width="2.4" height="2.2" fill="#b0a040" />
<rect x="93.17999999999999" y="37.300000000000004" width="3.8" height="0.7" fill="#f0c8b0" />
<path d="M92.58,38.0 L97.58,38.0 L95.78,40.4 L95.78,41.800000000000004 L94.38,41.800000000000004 L94.38,40.4 Z" fill="#101010" stroke="none" stroke-width="1" />
<rect x="94.48" y="38.2" width="1.2" height="2.2" fill="#10b8f0" />
<path d="M100.71000000000001,41.9 L104.11000000000001,38.8 L107.71000000000001,42.099999999999994 L104.31,45.3 Z" fill="#22e022" stroke="#404040" stroke-width="0.7" />
<path d="M103.11000000000001,41.9 L104.21000000000001,40.8 L105.41000000000001,42.0 L104.31,43.099999999999994 Z" fill="#e0e8e0" stroke="#208020" stroke-width="0.4" />
<path d="M100.31,38.0 L102.31,40.199999999999996" fill="none" stroke="#303030" stroke-width="0.7" />
<path d="M106.71000000000001,44.6 L107.91,45.8" fill="none" stroke="#404040" stroke-width="0.6" />
<rect x="104.91" y="37.300000000000004" width="3.8" height="0.7" fill="#f0c8b0" />
<path d="M104.31,38.0 L109.31,38.0 L107.51,40.4 L107.51,41.800000000000004 L106.11,41.800000000000004 L106.11,40.4 Z" fill="#101010" stroke="none" stroke-width="1" />
<rect x="106.21000000000001" y="38.2" width="1.2" height="2.2" fill="#10b8f0" />
<path d="M113.04,39.4 L113.04,44.8 L118.44,44.8 M113.24000000000001,44.6 L115.44,42.4" fill="none" stroke="#2828ff" stroke-width="1.2" />
<rect x="116.04" y="37.3" width="3.6" height="0.7" fill="#f4c8b0" />
<path d="M115.24000000000001,37.8 L120.44000000000001,37.8 L120.24000000000001,39.0 L118.74000000000001,40.4 L118.74000000000001,42.0 L116.94000000000001,42.0 L116.94000000000001,40.4 L115.44000000000001,39.0 Z" fill="#080808" stroke="none" stroke-width="1" />
<rect x="117.14000000000001" y="37.9" width="1.5" height="1.5" fill="#10c8f0" />
<rect x="117.14000000000001" y="39.3" width="1.5" height="1.2" fill="#1848ff" />
<rect x="117.14000000000001" y="40.5" width="1.5" height="1.1" fill="#109038" />
<ellipse cx="127.17" cy="43.6" rx="3.8" ry="1.8" fill="#c0b860" stroke="#181818" stroke-width="0.8"/>
<path d="M124.37,43.6 L129.97,43.6" fill="none" stroke="#2828ff" stroke-width="1.0" />
<path d="M125.37,43 L126.77000000000001,43" fill="none" stroke="#ffffff" stroke-width="0.6" />
<rect x="127.57000000000001" y="37.3" width="3.6" height="0.7" fill="#f4c8b0" />
<path d="M126.77000000000001,37.8 L131.97,37.8 L131.77,39.0 L130.27,40.4 L130.27,42.0 L128.47,42.0 L128.47,40.4 L126.97000000000001,39.0 Z" fill="#080808" stroke="none" stroke-width="1" />
<rect x="128.67000000000002" y="37.9" width="1.5" height="1.5" fill="#10c8f0" />
<rect x="128.67000000000002" y="39.3" width="1.5" height="1.2" fill="#1848ff" />
<rect x="128.67000000000002" y="40.5" width="1.5" height="1.1" fill="#109038" />
<path d="M136.1,45 L136.1,42.4 L138.1,40.6 L142.9,41.2" fill="none" stroke="#2828ff" stroke-width="1.1" stroke-dasharray="1.4 0.8"/>
<rect x="139.10000000000002" y="37.3" width="3.6" height="0.7" fill="#f4c8b0" />
<path d="M138.3,37.8 L143.5,37.8 L143.3,39.0 L141.8,40.4 L141.8,42.0 L140.0,42.0 L140.0,40.4 L138.5,39.0 Z" fill="#080808" stroke="none" stroke-width="1" />
<rect x="140.20000000000002" y="37.9" width="1.5" height="1.5" fill="#10c8f0" />
<rect x="140.20000000000002" y="39.3" width="1.5" height="1.2" fill="#1848ff" />
<rect x="140.20000000000002" y="40.5" width="1.5" height="1.1" fill="#109038" />
<path d="M147.03,45.2 L151.83,40.4" fill="none" stroke="#2828ff" stroke-width="1.1" stroke-dasharray="1.4 0.8"/>
<path d="M146.83,43.8 L146.83,45.4 L148.43,45.4" fill="none" stroke="#2828ff" stroke-width="0.8" />
<rect x="150.83" y="37.3" width="3.6" height="0.7" fill="#f4c8b0" />
<path d="M150.03,37.8 L155.23,37.8 L155.03,39.0 L153.53,40.4 L153.53,42.0 L151.73,42.0 L151.73,40.4 L150.23,39.0 Z" fill="#080808" stroke="none" stroke-width="1" />
<rect x="151.93" y="37.9" width="1.5" height="1.5" fill="#10c8f0" />
<rect x="151.93" y="39.3" width="1.5" height="1.2" fill="#1848ff" />
<rect x="151.93" y="40.5" width="1.5" height="1.1" fill="#109038" />
<path d="M158.76,39.4 L161.55999999999997,39.4 L161.55999999999997,43.2 L158.76,43.2 Z" fill="#ffffff" stroke="#101010" stroke-width="0.9" />
<path d="M159.35999999999999,45.2 L163.55999999999997,45.2" fill="none" stroke="#2828ff" stroke-width="0.9" />
<path d="M162.15999999999997,44 L164.35999999999999,40.6" fill="none" stroke="#e020e0" stroke-width="1.0" />
<rect x="162.35999999999999" y="37.3" width="3.6" height="0.7" fill="#f4c8b0" />
<path d="M161.55999999999997,37.8 L166.75999999999996,37.8 L166.55999999999997,39.0 L165.05999999999997,40.4 L165.05999999999997,42.0 L163.25999999999996,42.0 L163.25999999999996,40.4 L161.75999999999996,39.0 Z" fill="#080808" stroke="none" stroke-width="1" />
<rect x="163.45999999999998" y="37.9" width="1.5" height="1.5" fill="#10c8f0" />
<rect x="163.45999999999998" y="39.3" width="1.5" height="1.2" fill="#1848ff" />
<rect x="163.45999999999998" y="40.5" width="1.5" height="1.1" fill="#109038" />
<path d="M170.29,43 L172.08999999999997,45 M172.08999999999997,43 L170.29,45 M173.08999999999997,43.4 L175.89,43.4 M173.08999999999997,44.8 L175.89,44.8" fill="none" stroke="#2828ff" stroke-width="0.9" />
<rect x="173.89" y="37.3" width="3.6" height="0.7" fill="#f4c8b0" />
<path d="M173.08999999999997,37.8 L178.28999999999996,37.8 L178.08999999999997,39.0 L176.58999999999997,40.4 L176.58999999999997,42.0 L174.78999999999996,42.0 L174.78999999999996,40.4 L173.28999999999996,39.0 Z" fill="#080808" stroke="none" stroke-width="1" />
<rect x="174.98999999999998" y="37.9" width="1.5" height="1.5" fill="#10c8f0" />
<rect x="174.98999999999998" y="39.3" width="1.5" height="1.2" fill="#1848ff" />
<rect x="174.98999999999998" y="40.5" width="1.5" height="1.1" fill="#109038" />
<path d="M182.61999999999998,39.6 C184.01999999999998,38.6 187.42,38.8 188.42,40.4 C189.21999999999997,42.2 188.42,44.6 186.42,45.2 C184.01999999999998,45.8 181.61999999999998,44.8 181.42,42.6 C181.21999999999997,41.2 181.61999999999998,40.4 182.61999999999998,39.6 Z" fill="#f0d8f0" stroke="#2828ff" stroke-width="0.9" />
<rect x="183.61999999999998" y="40.4" width="3.4" height="4" fill="#ff7060" />
<path d="M185.21999999999997,40.4 L185.21999999999997,44.4" fill="none" stroke="#ffe0a0" stroke-width="0.7" />
<rect x="185.42" y="37.3" width="3.6" height="0.7" fill="#f4c8b0" />
<path d="M184.61999999999998,37.8 L189.81999999999996,37.8 L189.61999999999998,39.0 L188.11999999999998,40.4 L188.11999999999998,42.0 L186.31999999999996,42.0 L186.31999999999996,40.4 L184.81999999999996,39.0 Z" fill="#080808" stroke="none" stroke-width="1" />
<rect x="186.51999999999998" y="37.9" width="1.5" height="1.5" fill="#10c8f0" />
<rect x="186.51999999999998" y="39.3" width="1.5" height="1.2" fill="#1848ff" />
<rect x="186.51999999999998" y="40.5" width="1.5" height="1.1" fill="#109038" />
<path d="M192.6,42.6 L195.4,39.8 L201.4,39.8 L198.6,42.6 Z" fill="#ffffff" stroke="#101010" stroke-width="0.8" />
<path d="M192.6,43.4 L198.6,43.4 L201.4,40.8 L201.4,41.8 L198.6,44.6 L192.6,44.6 Z" fill="#30e050" stroke="#208030" stroke-width="0.3" />
<path d="M192.6,45 L198.6,45 L201.4,42.4 L201.4,43.4 L198.6,46 L192.6,46 Z" fill="#e030d0" stroke="#101010" stroke-width="0.4" />
<rect x="197.2" y="36.900000000000006" width="3.8" height="0.7" fill="#f0c8b0" />
<path d="M196.6,37.6 L201.6,37.6 L199.79999999999998,40.0 L199.79999999999998,41.400000000000006 L198.4,41.400000000000006 L198.4,40.0 Z" fill="#101010" stroke="none" stroke-width="1" />
<rect x="198.5" y="37.800000000000004" width="1.2" height="2.2" fill="#10b8f0" />
<path d="M214.6,38 L221.6,38 L220.6,42 L218.8,44.4 L217,42 L215.6,42 Z" fill="#d0d0d0" stroke="#a8a8a8" stroke-width="0.7" />
<path d="M216.6,38.6 L217.6,43 M219.4,38.6 L218.8,43" fill="none" stroke="#f4f4f4" stroke-width="0.7" />
<rect x="225.6" y="37.5" width="3.0" height="7.6" fill="#20e0e8" />
<circle cx="232" cy="41.2" r="1.9" fill="#f8f000" stroke="#000" stroke-width="0.8"/>
<rect x="231.2" y="43.0" width="1.6" height="1.7" fill="#000" />
<path d="M237.4,38 L239.6,40.2 M239.6,38 L237.4,40.2" fill="none" stroke="#ff2020" stroke-width="0.8" />
<circle cx="243.2" cy="41.6" r="1.9" fill="#f8f000" stroke="#000" stroke-width="0.8"/>
<rect x="242.39999999999998" y="43.4" width="1.6" height="1.7" fill="#000" />
<circle cx="251.79999999999998" cy="40.4" r="2.2" fill="#f0f0f0" stroke="#a8a8a8" stroke-width="0.7"/>
<circle cx="254.39999999999998" cy="41.8" r="2.2" fill="#f4f4f4" stroke="#a8a8a8" stroke-width="0.7"/>
<rect x="253.6" y="43.8" width="1.6" height="1.4" fill="#a8a8a8" />
<circle cx="252.39999999999998" cy="42.6" r="1.6" fill="#f4f4f4" stroke="#b0b0b0" stroke-width="0.6"/>
<rect x="260.4" y="38" width="1.3" height="5.8" fill="#b4b4b4" />
<rect x="262.4" y="38" width="1.3" height="5.8" fill="#b4b4b4" />
<circle cx="266.8" cy="42" r="1.9" fill="#d8d8d8" stroke="#808080" stroke-width="0.8"/>
<rect x="266.0" y="43.8" width="1.6" height="1.7" fill="#808080" />
<rect x="271.8" y="38" width="1.3" height="5.8" fill="#b4b4b4" />
<rect x="273.8" y="38" width="1.3" height="5.8" fill="#b4b4b4" />
<circle cx="278.2" cy="42" r="1.9" fill="#d8d8d8" stroke="#808080" stroke-width="0.8"/>
<rect x="277.4" y="43.8" width="1.6" height="1.7" fill="#808080" />
<circle cx="291.2" cy="40.4" r="2.7" fill="#d8d8d8" stroke="#a0a0a0" stroke-width="0.8"/>
<rect x="290.2" y="43" width="2.2" height="2.2" fill="#a0a0a0" />
<circle cx="290.6" cy="39.6" r="1.0" fill="#f4f4f4" stroke="none" stroke-width="1"/>
<rect x="298.6" y="37.5" width="3.0" height="7.6" fill="#20e0e8" />
<circle cx="305.2" cy="41.6" r="1.9" fill="#c8c8c8" stroke="#181818" stroke-width="0.8"/>
<rect x="304.4" y="43.4" width="1.6" height="1.7" fill="#181818" />
<path d="M310.2,38 L312.4,40.2 M312.4,38 L310.2,40.2" fill="none" stroke="#ff2020" stroke-width="0.8" />
<circle cx="316.6" cy="42" r="1.9" fill="#e0e0e0" stroke="#181818" stroke-width="0.8"/>
<rect x="315.8" y="43.8" width="1.6" height="1.7" fill="#181818" />
<circle cx="324.8" cy="40.4" r="2.2" fill="#f0f0f0" stroke="#a8a8a8" stroke-width="0.7"/>
<circle cx="327.4" cy="41.8" r="2.2" fill="#f4f4f4" stroke="#a8a8a8" stroke-width="0.7"/>
<rect x="326.59999999999997" y="43.8" width="1.6" height="1.4" fill="#a8a8a8" />
<circle cx="325.4" cy="42.6" r="1.6" fill="#f4f4f4" stroke="#b0b0b0" stroke-width="0.6"/>
<rect x="333.2" y="38" width="1.3" height="5.8" fill="#b4b4b4" />
<rect x="335.2" y="38" width="1.3" height="5.8" fill="#b4b4b4" />
<circle cx="339.8" cy="42.2" r="1.9" fill="#d8d8d8" stroke="#909090" stroke-width="0.8"/>
<rect x="339.0" y="44.0" width="1.6" height="1.7" fill="#909090" />
<rect x="344.4" y="38" width="1.3" height="5.8" fill="#b4b4b4" />
<rect x="346.4" y="38" width="1.3" height="5.8" fill="#b4b4b4" />
<circle cx="351.2" cy="42.2" r="1.9" fill="#d8d8d8" stroke="#909090" stroke-width="0.8"/>
<rect x="350.4" y="44.0" width="1.6" height="1.7" fill="#909090" />
<rect x="356.2" y="40.2" width="1.5" height="2.8" fill="#101010" />
<rect x="358.2" y="40.2" width="1.5" height="2.8" fill="#101010" />
<circle cx="362.8" cy="42" r="1.9" fill="#e8e8e8" stroke="#101010" stroke-width="0.8"/>
<rect x="362.0" y="43.8" width="1.6" height="1.7" fill="#101010" />
<path d="M386.2,41.3 L388.6,38.8 L391.8,38.8 L394.4,41.3 L391.8,43.9 L388.6,43.9 Z" fill="#10d8e8" stroke="#2424ff" stroke-width="1.2" stroke-linejoin="round"/>
<path d="M390.2,39.8 L390.2,42.8" fill="none" stroke="#106070" stroke-width="0.9" />
<path d="M398.4,42.4 L402,38.4 L405.6,42.4 C405.2,44.4 398.8,44.4 398.4,42.4 Z" fill="#10d8e8" stroke="#2424ff" stroke-width="1.1" stroke-linejoin="round"/>
<path d="M399.8,42.4 L404.2,42.4" fill="none" stroke="#106070" stroke-width="0.7" />
<path d="M408.8,40.6 L411.6,40.6 L412.2,39.7 L413.6,39.7 L414,40.6 L416.8,40.6 L415.8,42.5 L409.8,42.5 Z" fill="#10d8e8" stroke="#2424ff" stroke-width="0.8" />
<path d="M420.4,40.6 L424.8,40.6 L425.4,39.7 L426.8,39.7 L427,40.6 L428.8,40.6 L427.6,42.5 L421.4,42.5 Z" fill="#10d8e8" stroke="#2424ff" stroke-width="0.8" />
<ellipse cx="436.2" cy="41.3" rx="3.8" ry="2.4" fill="#10d8e8" stroke="#2424ff" stroke-width="1.1"/>
<circle cx="437" cy="41.3" r="0.9" fill="#106070" stroke="none" stroke-width="1"/>
<ellipse cx="447.6" cy="41.3" rx="4.2" ry="1.9" fill="#10d8e8" stroke="#2424ff" stroke-width="1.0"/>
<path d="M445.2,41.3 L450,41.3" fill="none" stroke="#106070" stroke-width="0.9" />
<path d="M459.4,41.2 L463,38.2 L466.6,41.2 L466.6,44.6 L459.4,44.6 Z" fill="#e010e0" stroke="#2020c0" stroke-width="0.6" />
<path d="M459.8,40.8 L463,38.2 L465,39.2 L465.4,37.6" fill="none" stroke="#402020" stroke-width="1.0" />
<path d="M460.6,43.8 L465.6,43.8" fill="none" stroke="#3030ff" stroke-width="0.9" />
<path d="M481.6,38 L484.4,38.4 L488.6,44.6 L487.4,45.2 L483,40.8 Z" fill="#202040" stroke="#101010" stroke-width="0.5" />
<path d="M484.2,40.4 L487.4,44.4" fill="none" stroke="#30a0e0" stroke-width="0.7" />
<path d="M486.2,38.6 L487.6,38.2 L487.4,39.6" fill="none" stroke="#101010" stroke-width="0.7" />
<circle cx="499.6" cy="40.2" r="2.7" fill="#f4f4f4" stroke="#101010" stroke-width="0.9"/>
<path d="M501.6,42.2 L504.40000000000003,45.2" fill="none" stroke="#101010" stroke-width="1.1" />
<path d="M502.6,43.400000000000006 L504.40000000000003,45.400000000000006" fill="none" stroke="#20a0e0" stroke-width="0.8" />
<circle cx="499.6" cy="40.2" r="1.5" fill="#909090" stroke="none" stroke-width="1"/>
<circle cx="511" cy="40.2" r="2.7" fill="#f4f4f4" stroke="#101010" stroke-width="0.9"/>
<path d="M513,42.2 L515.8,45.2" fill="none" stroke="#101010" stroke-width="1.1" />
<path d="M514,43.400000000000006 L515.8,45.400000000000006" fill="none" stroke="#20a0e0" stroke-width="0.8" />
<path d="M509.6,40.2 L512.4,40.2 M511,38.8 L511,41.6" fill="none" stroke="#101010" stroke-width="0.8" />
<circle cx="522.4" cy="40.2" r="2.7" fill="#f4f4f4" stroke="#101010" stroke-width="0.9"/>
<path d="M524.4,42.2 L527.1999999999999,45.2" fill="none" stroke="#101010" stroke-width="1.1" />
<path d="M525.4,43.400000000000006 L527.1999999999999,45.400000000000006" fill="none" stroke="#20a0e0" stroke-width="0.8" />
<path d="M526,38.6 L526,40.4" fill="none" stroke="#101010" stroke-width="0.8" />
<circle cx="534" cy="40.6" r="2.7" fill="#f4f4f4" stroke="#b0b0b0" stroke-width="0.9"/>
<path d="M536,42.6 L538.8,45.6" fill="none" stroke="#b0b0b0" stroke-width="1.1" />
<path d="M532.6,40.6 L535.4,40.6" fill="none" stroke="#b8b8b8" stroke-width="0.7" />
<path d="M543,40 C543.6,37.6 547.6,37 549,39.4 M549.2,42.4 C548.4,44.8 544.4,45.2 543,42.8" fill="none" stroke="#101010" stroke-width="1.0" />
<path d="M549.8,37.8 L549.4,40 L547.4,39.2 Z M542.4,44.4 L542.8,42.2 L544.6,43 Z" fill="#101010" stroke="none" stroke-width="1" />
<path d="M554.6,41.2 L561.6,41.2 M558.1,37.6 L558.1,44.8" fill="none" stroke="#101010" stroke-width="1.0" />
<path d="M558.1,36.8 L559.4,38.6 L556.8,38.6 Z M558.1,45.6 L559.4,43.8 L556.8,43.8 Z M553.8,41.2 L555.6,39.9 L555.6,42.5 Z M562.4,41.2 L560.6,39.9 L560.6,42.5 Z" fill="#101010" stroke="none" stroke-width="1" />
<rect x="574.4" y="35.4" width="11.4" height="11.4" fill="#fbfbfb" />
<rect x="574.4" y="35.4" width="11.4" height="0.6" fill="#a8a8a8" />
<rect x="574.4" y="35.4" width="0.65" height="11.4" fill="#9c9c9c" />
<rect x="574.4" y="46.3" width="11.4" height="0.5" fill="#ffffff" />
<rect x="585.3" y="35.4" width="0.5" height="11.4" fill="#dcdcdc" />
<circle cx="580.2" cy="41.2" r="3.5" fill="#ffffff" stroke="#101010" stroke-width="0.85"/>
<path d="M576.8,41.2 L583.6,41.2 M580.2,37.8 L580.2,44.6" fill="none" stroke="#202020" stroke-width="0.55" />
<ellipse cx="580.2" cy="41.2" rx="1.8" ry="3.5" fill="none" stroke="#404040" stroke-width="0.4"/><ellipse cx="580.2" cy="41.2" rx="3.5" ry="1.7" fill="none" stroke="#404040" stroke-width="0.4"/>
<rect x="588.2" y="37.8" width="5.4" height="5.2" fill="#10d0d8" stroke="#101010" stroke-width="0.8"/>
<rect x="590.4" y="39.6" width="5.4" height="5.4" fill="#20e8f0" stroke="#c02020" stroke-width="0.6"/>
<path d="M590.4,39.6 L595.8,39.6 L595.8,45" fill="none" stroke="#101010" stroke-width="0.7" />
<path d="M599,39.6 L601.6,37.6 L607,38.6 L607,43.4 L604,45.4 L599,44 Z" fill="#10c8d0" stroke="none" stroke-width="1" />
<path d="M599,39.6 L601.6,37.6 L607,38.6 L604,40.4 Z" fill="#40e8f0" stroke="none" stroke-width="1" />
<path d="M604,40.4 L607,38.6 L607,43.4 L604,45.4 Z" fill="#089098" stroke="none" stroke-width="1" />
<rect x="611.2" y="38" width="4.2" height="4" fill="#10d0d8" stroke="#c02020" stroke-width="0.7"/>
<rect x="613.4" y="40.2" width="5" height="4.8" fill="#20e8f0" stroke="#101010" stroke-width="0.7"/>
<path d="M611.2,38 L613.4,40.2" fill="none" stroke="#c02020" stroke-width="0.6" />
<path d="M622,39.6 L625,37.8 L629.2,38.4 L627.4,44 L624.6,45.2 L622.4,42.6 Z" fill="#9a9a9a" stroke="#888888" stroke-width="0.5" />
<rect x="633.4" y="38.6" width="8.2" height="4.2" fill="#ffffff" stroke="#101010" stroke-width="0.8"/>
<path d="M634,40 C636,39 638,41.4 641,40" fill="none" stroke="#e02020" stroke-width="0.9" />
<rect x="633.4" y="38.2" width="8.2" height="0.8" fill="#c02020" />
<path d="M641.4,43.6 L641.4,45.4 L639.6,45.4" fill="none" stroke="#101010" stroke-width="0.9" />
</g>
</svg>
</body></html>
